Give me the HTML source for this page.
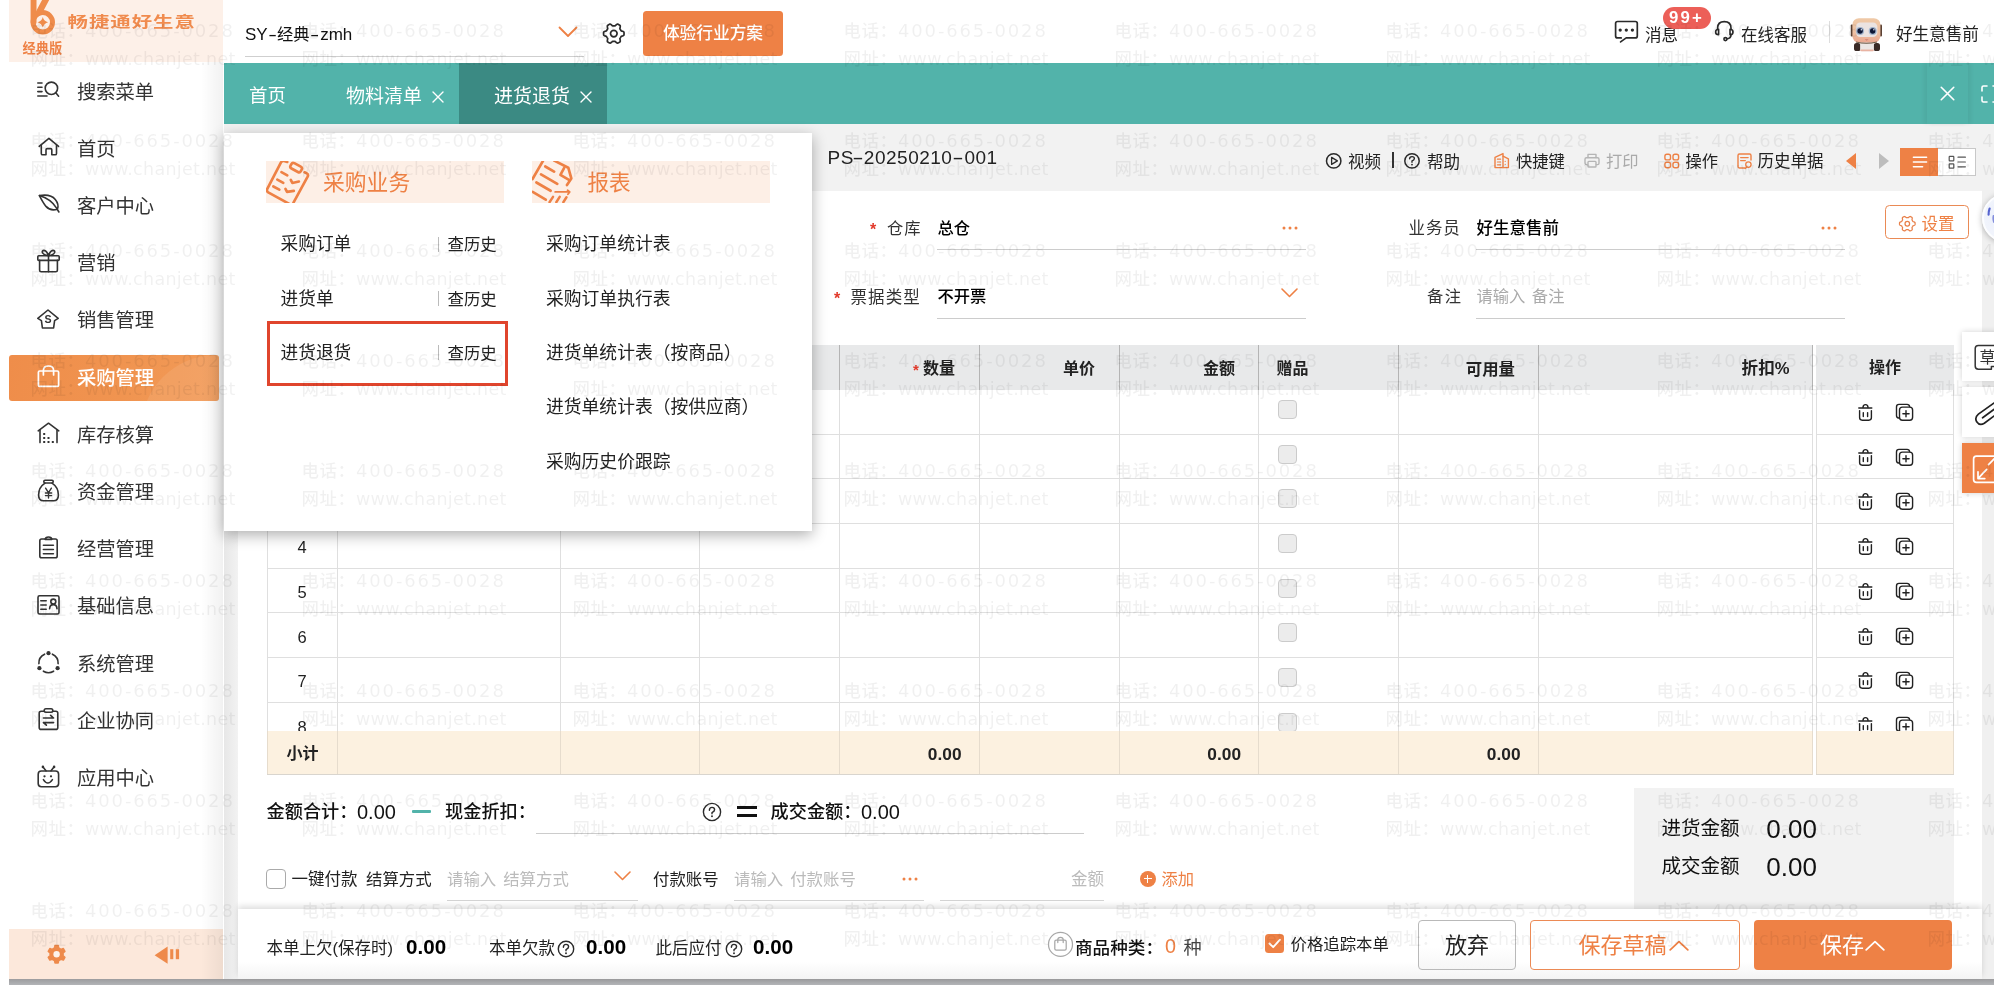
<!DOCTYPE html>
<html lang="zh-CN"><head><meta charset="utf-8"><title>进货退货</title>
<style>
html,body{margin:0;padding:0}
body{width:1994px;height:990px;position:relative;overflow:hidden;background:#fff;font-family:"Liberation Sans","Noto Sans CJK SC",sans-serif;-webkit-font-smoothing:antialiased}
.b{position:absolute;box-sizing:border-box}
.t{position:absolute;white-space:nowrap;line-height:1}
.wm{position:absolute;white-space:nowrap;line-height:1;font-size:17.5px;letter-spacing:0.5px;font-weight:500;color:rgba(0,0,0,0.058);transform:translateY(-50%)}
.hy{display:inline-block;text-align:center}
.hy>i{display:inline-block;font-style:normal;transform:scaleX(1.7)}
.wl{font-family:"DejaVu Sans","Liberation Sans",sans-serif;font-weight:400;margin-left:0.5px}
</style></head><body>
<div class="b" style="left:0;top:0;width:1994px;height:990px;overflow:hidden;will-change:transform">
<!-- base -->
<div class="b" style="left:9px;top:0px;width:1985px;height:979px;background:#fff"></div>
<div class="b" style="left:9px;top:979px;width:1985px;height:6px;background:linear-gradient(180deg,#9c9c9e,#b2b4b7)"></div>
<div class="b" style="left:224px;top:124px;width:1770px;height:67.5px;background:#f2f2f2"></div>
<div class="b" style="left:1982.2px;top:190px;width:12px;height:789px;background:#f0f0f0"></div>
<div class="b" style="left:224px;top:190px;width:14px;height:789px;background:linear-gradient(90deg,#e7e7e7,#f2f2f2)"></div>
<div class="b" style="left:238px;top:191px;width:1744px;height:719px;background:#fff"></div>
<!-- header -->
<span class="t" style="left:245px;top:34.300000000000004px;font-size:16.3px;color:#111;font-weight:400;transform:translate(0,-50%);letter-spacing:0"><span style="font-size:17px">SY</span><span class="hy" style="width:9.3px"><i style="transform:scaleX(1.6)">-</i></span>经典<span class="hy" style="width:10.6px"><i style="transform:scaleX(1.7)">-</i></span><span style="font-size:17px">zmh</span></span>
<div class="b" style="left:245px;top:56px;width:339px;height:1px;background:#cfcfcf"></div>
<svg class="b" style="left:558px;top:26px;" width="20" height="12" viewBox="0 0 20 12" fill="none" stroke-linecap="round" stroke-linejoin="round"><path d="M1.5 1.5 L10 10 L18.5 1.5" stroke="#ee8145" stroke-width="1.8"/></svg>
<div class="b" style="left:643.3px;top:11.3px;width:139.5px;height:44.5px;background:#ee8145;border-radius:3.5px"></div>
<span class="t" style="left:713px;top:34.2px;font-size:16.7px;color:#fff;font-weight:500;transform:translate(-50%,-50%);">体验行业方案</span>
<span class="t" style="left:1645px;top:34.7px;font-size:16.5px;color:#222;font-weight:400;transform:translate(0,-50%);">消息</span>
<div class="b" style="left:1663px;top:7px;width:48px;height:22px;background:#ec5f58;border-radius:11px"></div>
<span class="t" style="left:1686.6px;top:18.3px;font-size:16.8px;color:#fff;font-weight:700;transform:translate(-50%,-50%);letter-spacing:2.2px">99+</span>
<span class="t" style="left:1741px;top:34.7px;font-size:16.5px;color:#222;font-weight:400;transform:translate(0,-50%);">在线客服</span>
<div class="b" style="left:1829px;top:21px;width:1px;height:22px;background:#ddd"></div>
<span class="t" style="left:1896px;top:34.7px;font-size:16.6px;color:#222;font-weight:400;transform:translate(0,-50%);">好生意售前</span>
<!-- tabs -->
<div class="b" style="left:224px;top:63px;width:1770px;height:61px;background:#52b3aa"></div>
<div class="b" style="left:459px;top:63px;width:148px;height:61px;background:#3b8a83"></div>
<div class="b" style="left:1926.5px;top:63px;width:41.5px;height:61px;background:#51b2a9;box-shadow:-3px 0 4px rgba(0,0,0,.055),3px 0 4px rgba(0,0,0,.055)"></div>
<span class="t" style="left:249px;top:95.7px;font-size:18.5px;color:#fff;font-weight:400;transform:translate(0,-50%);">首页</span>
<span class="t" style="left:346px;top:95.7px;font-size:19px;color:#fff;font-weight:400;transform:translate(0,-50%);">物料清单</span>
<span class="t" style="left:494px;top:95.7px;font-size:19px;color:#fff;font-weight:400;transform:translate(0,-50%);">进货退货</span>
<svg class="b" style="left:432px;top:91px;" width="12" height="12" viewBox="0 0 12 12" fill="none" stroke-linecap="round" stroke-linejoin="round"><path d="M1 1 L11 11 M11 1 L1 11" stroke="#fff" stroke-width="1.4"/></svg>
<svg class="b" style="left:580px;top:91px;" width="12" height="12" viewBox="0 0 12 12" fill="none" stroke-linecap="round" stroke-linejoin="round"><path d="M1 1 L11 11 M11 1 L1 11" stroke="#fff" stroke-width="1.4"/></svg>
<svg class="b" style="left:1940px;top:86px;" width="15" height="15" viewBox="0 0 12 12" fill="none" stroke-linecap="round" stroke-linejoin="round"><path d="M1 1 L11 11 M11 1 L1 11" stroke="#fff" stroke-width="1.3"/></svg>
<svg class="b" style="left:1981px;top:85px;" width="18" height="18" viewBox="0 0 18 18" fill="none" stroke-linecap="round" stroke-linejoin="round"><path d="M1 6V2.5Q1 1 2.5 1H6 M12 1H15.5Q17 1 17 2.5V6 M1 12V15.5Q1 17 2.5 17H6 M12 17H15.5Q17 17 17 15.5V12" stroke="#fff" stroke-width="1.6"/></svg>
<!-- toolbar -->
<span class="t" style="left:827.5px;top:157.29999999999998px;font-size:19px;color:#222;font-weight:400;transform:translate(0,-50%);letter-spacing:0.5px">PS<span class="hy" style="width:10px"><i style="transform:scaleX(1.8)">-</i></span>20250210<span class="hy" style="width:12px"><i style="transform:scaleX(1.8)">-</i></span>001</span>
<span class="t" style="left:1348px;top:161.7px;font-size:16.5px;color:#222;font-weight:400;transform:translate(0,-50%);">视频</span>
<div class="b" style="left:1392.4px;top:152px;width:1.2px;height:16px;background:#333"></div>
<span class="t" style="left:1427px;top:161.7px;font-size:16.5px;color:#222;font-weight:400;transform:translate(0,-50%);">帮助</span>
<span class="t" style="left:1516px;top:161.2px;font-size:16.3px;color:#222;font-weight:400;transform:translate(0,-50%);">快捷键</span>
<span class="t" style="left:1606px;top:160.7px;font-size:16.3px;color:#aaa;font-weight:400;transform:translate(0,-50%);">打印</span>
<span class="t" style="left:1685.5px;top:160.7px;font-size:16.3px;color:#222;font-weight:400;transform:translate(0,-50%);">操作</span>
<span class="t" style="left:1757.5px;top:160.7px;font-size:16.5px;color:#222;font-weight:400;transform:translate(0,-50%);">历史单据</span>
<svg class="b" style="left:1846px;top:153px;" width="10" height="16" viewBox="0 0 10 16" fill="none" stroke-linecap="round" stroke-linejoin="round"><path d="M10 0 L0 8 L10 16 Z" fill="#ee8145"/></svg>
<svg class="b" style="left:1879px;top:153px;" width="10" height="16" viewBox="0 0 10 16" fill="none" stroke-linecap="round" stroke-linejoin="round"><path d="M0 0 L10 8 L0 16 Z" fill="#bdbdbd"/></svg>
<div class="b" style="left:1900px;top:148px;width:76px;height:28px;background:#fff;border:1px solid #c8c8c8"></div>
<div class="b" style="left:1900px;top:148px;width:38px;height:28px;background:#ee8145"></div>
<!-- form -->
<span class="t" style="left:870px;top:229.7px;font-size:16px;color:#e2392a;font-weight:700;transform:translate(0,-50%);">*</span>
<span class="t" style="left:887px;top:227.7px;font-size:16.3px;color:#333;font-weight:400;transform:translate(0,-50%);letter-spacing:1px">仓库</span>
<span class="t" style="left:937.5px;top:228.2px;font-size:16.3px;color:#000;font-weight:500;transform:translate(0,-50%);">总仓</span>
<div class="b" style="left:937px;top:249px;width:369px;height:1px;background:#ccc"></div>
<span class="t" style="left:834px;top:298.7px;font-size:16px;color:#e2392a;font-weight:700;transform:translate(0,-50%);">*</span>
<span class="t" style="left:850.5px;top:297.2px;font-size:16.5px;color:#333;font-weight:400;transform:translate(0,-50%);letter-spacing:1.1px">票据类型</span>
<span class="t" style="left:937.5px;top:295.9px;font-size:16.3px;color:#000;font-weight:500;transform:translate(0,-50%);">不开票</span>
<div class="b" style="left:937px;top:318px;width:369px;height:1px;background:#ccc"></div>
<svg class="b" style="left:1281px;top:288px;" width="17" height="10" viewBox="0 0 17 10" fill="none" stroke-linecap="round" stroke-linejoin="round"><path d="M1 1 L8.5 8.5 L16 1" stroke="#ee8145" stroke-width="1.6"/></svg>
<svg class="b" style="left:1282px;top:226px;" width="16" height="4" viewBox="0 0 16 4" fill="none" stroke-linecap="round" stroke-linejoin="round"><circle cx="2" cy="2" r="1.5" fill="#ee8145"/><circle cx="8" cy="2" r="1.5" fill="#ee8145"/><circle cx="14" cy="2" r="1.5" fill="#ee8145"/></svg>
<span class="t" style="left:1408.5px;top:227.89999999999998px;font-size:16.5px;color:#333;font-weight:400;transform:translate(0,-50%);letter-spacing:0.9px">业务员</span>
<span class="t" style="left:1476.5px;top:228.2px;font-size:16.5px;color:#000;font-weight:500;transform:translate(0,-50%);">好生意售前</span>
<div class="b" style="left:1476px;top:249px;width:369px;height:1px;background:#ccc"></div>
<svg class="b" style="left:1821px;top:226px;" width="16" height="4" viewBox="0 0 16 4" fill="none" stroke-linecap="round" stroke-linejoin="round"><circle cx="2" cy="2" r="1.5" fill="#ee8145"/><circle cx="8" cy="2" r="1.5" fill="#ee8145"/><circle cx="14" cy="2" r="1.5" fill="#ee8145"/></svg>
<span class="t" style="left:1427px;top:296.3px;font-size:16.3px;color:#333;font-weight:400;transform:translate(0,-50%);letter-spacing:1.5px">备注</span>
<span class="t" style="left:1476.5px;top:296.3px;font-size:16.3px;color:#aaa;font-weight:400;transform:translate(0,-50%);word-spacing:2px">请输入 备注</span>
<div class="b" style="left:1476px;top:318px;width:369px;height:1px;background:#ccc"></div>
<div class="b" style="left:1885.3px;top:204.8px;width:83.4px;height:33.9px;border:1.3px solid #ea8a55;border-radius:4.5px;background:#fff"></div>
<span class="t" style="left:1921.5px;top:223.7px;font-size:16.5px;color:#ee8145;font-weight:400;transform:translate(0,-50%);">设置</span>
<!-- table -->
<div class="b" style="left:267px;top:345px;width:1545px;height:44.6px;background:#e8e9ea"></div>
<div class="b" style="left:1816px;top:345px;width:138px;height:44.6px;background:#e8e9ea"></div>
<div class="b" style="left:267px;top:731px;width:1545px;height:43.5px;background:#fcf1e0"></div>
<div class="b" style="left:1816px;top:731px;width:138px;height:43.5px;background:#fcf1e0"></div>
<div class="b" style="left:267px;top:434px;width:1545px;height:1px;background:#dfdfdf"></div>
<div class="b" style="left:1816px;top:434px;width:138px;height:1px;background:#dfdfdf"></div>
<div class="b" style="left:267px;top:478px;width:1545px;height:1px;background:#dfdfdf"></div>
<div class="b" style="left:1816px;top:478px;width:138px;height:1px;background:#dfdfdf"></div>
<div class="b" style="left:267px;top:523px;width:1545px;height:1px;background:#dfdfdf"></div>
<div class="b" style="left:1816px;top:523px;width:138px;height:1px;background:#dfdfdf"></div>
<div class="b" style="left:267px;top:568px;width:1545px;height:1px;background:#dfdfdf"></div>
<div class="b" style="left:1816px;top:568px;width:138px;height:1px;background:#dfdfdf"></div>
<div class="b" style="left:267px;top:612px;width:1545px;height:1px;background:#dfdfdf"></div>
<div class="b" style="left:1816px;top:612px;width:138px;height:1px;background:#dfdfdf"></div>
<div class="b" style="left:267px;top:657px;width:1545px;height:1px;background:#dfdfdf"></div>
<div class="b" style="left:1816px;top:657px;width:138px;height:1px;background:#dfdfdf"></div>
<div class="b" style="left:267px;top:702px;width:1545px;height:1px;background:#dfdfdf"></div>
<div class="b" style="left:1816px;top:702px;width:138px;height:1px;background:#dfdfdf"></div>
<div class="b" style="left:267px;top:774px;width:1545px;height:1px;background:#d8d8d8"></div>
<div class="b" style="left:1816px;top:774px;width:138px;height:1px;background:#d8d8d8"></div>
<div class="b" style="left:267px;top:345px;width:1px;height:44.6px;background:#b4b4b4"></div>
<div class="b" style="left:267px;top:389.6px;width:1px;height:385px;background:#dfdfdf"></div>
<div class="b" style="left:337px;top:345px;width:1px;height:44.6px;background:#b4b4b4"></div>
<div class="b" style="left:337px;top:389.6px;width:1px;height:385px;background:#dfdfdf"></div>
<div class="b" style="left:560px;top:345px;width:1px;height:44.6px;background:#b4b4b4"></div>
<div class="b" style="left:560px;top:389.6px;width:1px;height:385px;background:#dfdfdf"></div>
<div class="b" style="left:699px;top:345px;width:1px;height:44.6px;background:#b4b4b4"></div>
<div class="b" style="left:699px;top:389.6px;width:1px;height:385px;background:#dfdfdf"></div>
<div class="b" style="left:839px;top:345px;width:1px;height:44.6px;background:#b4b4b4"></div>
<div class="b" style="left:839px;top:389.6px;width:1px;height:385px;background:#dfdfdf"></div>
<div class="b" style="left:979px;top:345px;width:1px;height:44.6px;background:#b4b4b4"></div>
<div class="b" style="left:979px;top:389.6px;width:1px;height:385px;background:#dfdfdf"></div>
<div class="b" style="left:1119px;top:345px;width:1px;height:44.6px;background:#b4b4b4"></div>
<div class="b" style="left:1119px;top:389.6px;width:1px;height:385px;background:#dfdfdf"></div>
<div class="b" style="left:1258px;top:345px;width:1px;height:44.6px;background:#b4b4b4"></div>
<div class="b" style="left:1258px;top:389.6px;width:1px;height:385px;background:#dfdfdf"></div>
<div class="b" style="left:1398px;top:345px;width:1px;height:44.6px;background:#b4b4b4"></div>
<div class="b" style="left:1398px;top:389.6px;width:1px;height:385px;background:#dfdfdf"></div>
<div class="b" style="left:1538px;top:345px;width:1px;height:44.6px;background:#b4b4b4"></div>
<div class="b" style="left:1538px;top:389.6px;width:1px;height:385px;background:#dfdfdf"></div>
<div class="b" style="left:1812px;top:345px;width:1px;height:44.6px;background:#b4b4b4"></div>
<div class="b" style="left:1812px;top:389.6px;width:1px;height:385px;background:#dfdfdf"></div>
<div class="b" style="left:1953px;top:389.6px;width:1px;height:385px;background:#dfdfdf"></div>
<div class="b" style="left:1816px;top:389.6px;width:1px;height:385px;background:#dfdfdf"></div>
<span class="t" style="left:913px;top:368.7px;font-size:15px;color:#e2392a;font-weight:700;transform:translate(0,-50%);">*</span>
<span class="t" style="left:955px;top:369.2px;font-size:16px;color:#222;font-weight:700;transform:translate(-100%,-50%);">数量</span>
<span class="t" style="left:1095px;top:369.2px;font-size:16px;color:#222;font-weight:700;transform:translate(-100%,-50%);">单价</span>
<span class="t" style="left:1235px;top:369.2px;font-size:16px;color:#222;font-weight:700;transform:translate(-100%,-50%);">金额</span>
<span class="t" style="left:1276.5px;top:369.2px;font-size:16px;color:#222;font-weight:700;transform:translate(0,-50%);">赠品</span>
<span class="t" style="left:1515px;top:369.2px;font-size:16.4px;color:#222;font-weight:700;transform:translate(-100%,-50%);">可用量</span>
<span class="t" style="left:1789.5px;top:369.2px;font-size:16.6px;color:#222;font-weight:700;transform:translate(-100%,-50%);">折扣%</span>
<span class="t" style="left:1885px;top:368.2px;font-size:16px;color:#222;font-weight:700;transform:translate(-50%,-50%);">操作</span>
<div class="b" style="left:1278px;top:399.8px;width:19px;height:19px;background:#ececec;border:1px solid #cbcbcb;border-radius:4px"></div>
<svg class="b" style="left:1855px;top:401.0px" width="62" height="22" viewBox="1855 401 62 22" fill="none" stroke="#222" stroke-width="1.4" stroke-linecap="round" stroke-linejoin="round"><path d="M1858.8 408H1871.8"/><path d="M1863 407.6Q1863 404.6 1865.5 404.6Q1868 404.6 1868 407.6"/><path d="M1859.6 410.6V417.6Q1859.6 420.2 1862.2 420.2H1868.8Q1871.4 420.2 1871.4 417.6V410.6"/><path d="M1863.3 412.6V416.6 M1867.6 412.6V416.6"/><path d="M1909.6 406.6Q1909.4 404.4 1907 404.4H1899Q1896.5 404.4 1896.5 407V415.4Q1896.5 417.6 1898.6 418"/><rect x="1899.5" y="407.1" width="13.1" height="13.1" rx="2.9"/><path d="M1906 410.6V416.8 M1902.9 413.7H1909.1"/></svg>
<div class="b" style="left:1278px;top:444.5px;width:19px;height:19px;background:#ececec;border:1px solid #cbcbcb;border-radius:4px"></div>
<svg class="b" style="left:1855px;top:445.7px" width="62" height="22" viewBox="1855 401 62 22" fill="none" stroke="#222" stroke-width="1.4" stroke-linecap="round" stroke-linejoin="round"><path d="M1858.8 408H1871.8"/><path d="M1863 407.6Q1863 404.6 1865.5 404.6Q1868 404.6 1868 407.6"/><path d="M1859.6 410.6V417.6Q1859.6 420.2 1862.2 420.2H1868.8Q1871.4 420.2 1871.4 417.6V410.6"/><path d="M1863.3 412.6V416.6 M1867.6 412.6V416.6"/><path d="M1909.6 406.6Q1909.4 404.4 1907 404.4H1899Q1896.5 404.4 1896.5 407V415.4Q1896.5 417.6 1898.6 418"/><rect x="1899.5" y="407.1" width="13.1" height="13.1" rx="2.9"/><path d="M1906 410.6V416.8 M1902.9 413.7H1909.1"/></svg>
<div class="b" style="left:1278px;top:489.20000000000005px;width:19px;height:19px;background:#ececec;border:1px solid #cbcbcb;border-radius:4px"></div>
<svg class="b" style="left:1855px;top:490.4px" width="62" height="22" viewBox="1855 401 62 22" fill="none" stroke="#222" stroke-width="1.4" stroke-linecap="round" stroke-linejoin="round"><path d="M1858.8 408H1871.8"/><path d="M1863 407.6Q1863 404.6 1865.5 404.6Q1868 404.6 1868 407.6"/><path d="M1859.6 410.6V417.6Q1859.6 420.2 1862.2 420.2H1868.8Q1871.4 420.2 1871.4 417.6V410.6"/><path d="M1863.3 412.6V416.6 M1867.6 412.6V416.6"/><path d="M1909.6 406.6Q1909.4 404.4 1907 404.4H1899Q1896.5 404.4 1896.5 407V415.4Q1896.5 417.6 1898.6 418"/><rect x="1899.5" y="407.1" width="13.1" height="13.1" rx="2.9"/><path d="M1906 410.6V416.8 M1902.9 413.7H1909.1"/></svg>
<span class="t" style="left:302px;top:547.1px;font-size:16.5px;color:#222;font-weight:400;transform:translate(-50%,-50%);z-index:0">4</span>
<div class="b" style="left:1278px;top:533.9000000000001px;width:19px;height:19px;background:#ececec;border:1px solid #cbcbcb;border-radius:4px"></div>
<svg class="b" style="left:1855px;top:535.1px" width="62" height="22" viewBox="1855 401 62 22" fill="none" stroke="#222" stroke-width="1.4" stroke-linecap="round" stroke-linejoin="round"><path d="M1858.8 408H1871.8"/><path d="M1863 407.6Q1863 404.6 1865.5 404.6Q1868 404.6 1868 407.6"/><path d="M1859.6 410.6V417.6Q1859.6 420.2 1862.2 420.2H1868.8Q1871.4 420.2 1871.4 417.6V410.6"/><path d="M1863.3 412.6V416.6 M1867.6 412.6V416.6"/><path d="M1909.6 406.6Q1909.4 404.4 1907 404.4H1899Q1896.5 404.4 1896.5 407V415.4Q1896.5 417.6 1898.6 418"/><rect x="1899.5" y="407.1" width="13.1" height="13.1" rx="2.9"/><path d="M1906 410.6V416.8 M1902.9 413.7H1909.1"/></svg>
<span class="t" style="left:302px;top:591.8px;font-size:16.5px;color:#222;font-weight:400;transform:translate(-50%,-50%);z-index:0">5</span>
<div class="b" style="left:1278px;top:578.6px;width:19px;height:19px;background:#ececec;border:1px solid #cbcbcb;border-radius:4px"></div>
<svg class="b" style="left:1855px;top:579.8px" width="62" height="22" viewBox="1855 401 62 22" fill="none" stroke="#222" stroke-width="1.4" stroke-linecap="round" stroke-linejoin="round"><path d="M1858.8 408H1871.8"/><path d="M1863 407.6Q1863 404.6 1865.5 404.6Q1868 404.6 1868 407.6"/><path d="M1859.6 410.6V417.6Q1859.6 420.2 1862.2 420.2H1868.8Q1871.4 420.2 1871.4 417.6V410.6"/><path d="M1863.3 412.6V416.6 M1867.6 412.6V416.6"/><path d="M1909.6 406.6Q1909.4 404.4 1907 404.4H1899Q1896.5 404.4 1896.5 407V415.4Q1896.5 417.6 1898.6 418"/><rect x="1899.5" y="407.1" width="13.1" height="13.1" rx="2.9"/><path d="M1906 410.6V416.8 M1902.9 413.7H1909.1"/></svg>
<span class="t" style="left:302px;top:636.5px;font-size:16.5px;color:#222;font-weight:400;transform:translate(-50%,-50%);z-index:0">6</span>
<div class="b" style="left:1278px;top:623.3px;width:19px;height:19px;background:#ececec;border:1px solid #cbcbcb;border-radius:4px"></div>
<svg class="b" style="left:1855px;top:624.5px" width="62" height="22" viewBox="1855 401 62 22" fill="none" stroke="#222" stroke-width="1.4" stroke-linecap="round" stroke-linejoin="round"><path d="M1858.8 408H1871.8"/><path d="M1863 407.6Q1863 404.6 1865.5 404.6Q1868 404.6 1868 407.6"/><path d="M1859.6 410.6V417.6Q1859.6 420.2 1862.2 420.2H1868.8Q1871.4 420.2 1871.4 417.6V410.6"/><path d="M1863.3 412.6V416.6 M1867.6 412.6V416.6"/><path d="M1909.6 406.6Q1909.4 404.4 1907 404.4H1899Q1896.5 404.4 1896.5 407V415.4Q1896.5 417.6 1898.6 418"/><rect x="1899.5" y="407.1" width="13.1" height="13.1" rx="2.9"/><path d="M1906 410.6V416.8 M1902.9 413.7H1909.1"/></svg>
<span class="t" style="left:302px;top:681.2px;font-size:16.5px;color:#222;font-weight:400;transform:translate(-50%,-50%);z-index:0">7</span>
<div class="b" style="left:1278px;top:668.0px;width:19px;height:19px;background:#ececec;border:1px solid #cbcbcb;border-radius:4px"></div>
<svg class="b" style="left:1855px;top:669.2px" width="62" height="22" viewBox="1855 401 62 22" fill="none" stroke="#222" stroke-width="1.4" stroke-linecap="round" stroke-linejoin="round"><path d="M1858.8 408H1871.8"/><path d="M1863 407.6Q1863 404.6 1865.5 404.6Q1868 404.6 1868 407.6"/><path d="M1859.6 410.6V417.6Q1859.6 420.2 1862.2 420.2H1868.8Q1871.4 420.2 1871.4 417.6V410.6"/><path d="M1863.3 412.6V416.6 M1867.6 412.6V416.6"/><path d="M1909.6 406.6Q1909.4 404.4 1907 404.4H1899Q1896.5 404.4 1896.5 407V415.4Q1896.5 417.6 1898.6 418"/><rect x="1899.5" y="407.1" width="13.1" height="13.1" rx="2.9"/><path d="M1906 410.6V416.8 M1902.9 413.7H1909.1"/></svg>
<span class="t" style="left:302px;top:726.9000000000001px;font-size:16.5px;color:#222;font-weight:400;transform:translate(-50%,-50%);z-index:0">8</span>
<div class="b" style="left:1278px;top:712.7px;width:19px;height:19px;background:#ececec;border:1px solid #cbcbcb;border-radius:4px"></div>
<svg class="b" style="left:1855px;top:713.9000000000001px" width="62" height="22" viewBox="1855 401 62 22" fill="none" stroke="#222" stroke-width="1.4" stroke-linecap="round" stroke-linejoin="round"><path d="M1858.8 408H1871.8"/><path d="M1863 407.6Q1863 404.6 1865.5 404.6Q1868 404.6 1868 407.6"/><path d="M1859.6 410.6V417.6Q1859.6 420.2 1862.2 420.2H1868.8Q1871.4 420.2 1871.4 417.6V410.6"/><path d="M1863.3 412.6V416.6 M1867.6 412.6V416.6"/><path d="M1909.6 406.6Q1909.4 404.4 1907 404.4H1899Q1896.5 404.4 1896.5 407V415.4Q1896.5 417.6 1898.6 418"/><rect x="1899.5" y="407.1" width="13.1" height="13.1" rx="2.9"/><path d="M1906 410.6V416.8 M1902.9 413.7H1909.1"/></svg>
<div class="b" style="left:267px;top:731px;width:1545px;height:43.5px;background:#fcf1e0"></div>
<div class="b" style="left:1816px;top:731px;width:138px;height:43.5px;background:#fcf1e0"></div>
<div class="b" style="left:267px;top:731px;width:1px;height:43.5px;background:#e6dccd"></div>
<div class="b" style="left:337px;top:731px;width:1px;height:43.5px;background:#e6dccd"></div>
<div class="b" style="left:560px;top:731px;width:1px;height:43.5px;background:#e6dccd"></div>
<div class="b" style="left:699px;top:731px;width:1px;height:43.5px;background:#e6dccd"></div>
<div class="b" style="left:839px;top:731px;width:1px;height:43.5px;background:#e6dccd"></div>
<div class="b" style="left:979px;top:731px;width:1px;height:43.5px;background:#e6dccd"></div>
<div class="b" style="left:1119px;top:731px;width:1px;height:43.5px;background:#e6dccd"></div>
<div class="b" style="left:1258px;top:731px;width:1px;height:43.5px;background:#e6dccd"></div>
<div class="b" style="left:1398px;top:731px;width:1px;height:43.5px;background:#e6dccd"></div>
<div class="b" style="left:1538px;top:731px;width:1px;height:43.5px;background:#e6dccd"></div>
<div class="b" style="left:1812px;top:731px;width:1px;height:43.5px;background:#e6dccd"></div>
<div class="b" style="left:1816px;top:731px;width:1px;height:43.5px;background:#e6dccd"></div>
<div class="b" style="left:1953px;top:731px;width:1px;height:43.5px;background:#e6dccd"></div>
<div class="b" style="left:267px;top:774px;width:1545px;height:1px;background:#d9d5ce"></div>
<div class="b" style="left:1816px;top:774px;width:138px;height:1px;background:#d9d5ce"></div>
<span class="t" style="left:302.5px;top:754.2px;font-size:16px;color:#222;font-weight:700;transform:translate(-50%,-50%);">小计</span>
<span class="t" style="left:961.5px;top:754.7px;font-size:17.3px;color:#222;font-weight:700;transform:translate(-100%,-50%);">0.00</span>
<span class="t" style="left:1241px;top:754.7px;font-size:17.3px;color:#222;font-weight:700;transform:translate(-100%,-50%);">0.00</span>
<span class="t" style="left:1520.5px;top:754.7px;font-size:17.3px;color:#222;font-weight:700;transform:translate(-100%,-50%);">0.00</span>
<!-- summary -->
<span class="t" style="left:266.5px;top:812.2px;font-size:18.2px;color:#111;font-weight:500;transform:translate(0,-50%);letter-spacing:0">金额合计：</span>
<span class="t" style="left:357px;top:811.7px;font-size:20px;color:#111;font-weight:400;transform:translate(0,-50%);">0.00</span>
<div class="b" style="left:412px;top:810px;width:19px;height:2.5px;background:#52b3aa;border-radius:1px"></div>
<span class="t" style="left:445px;top:812.2px;font-size:18.2px;color:#111;font-weight:500;transform:translate(0,-50%);">现金折扣：</span>
<div class="b" style="left:536px;top:833px;width:548px;height:1px;background:#ccc"></div>
<div class="b" style="left:736.5px;top:806px;width:20px;height:3px;background:#111"></div>
<div class="b" style="left:736.5px;top:814px;width:20px;height:3px;background:#111"></div>
<span class="t" style="left:770.5px;top:812.2px;font-size:18.2px;color:#111;font-weight:500;transform:translate(0,-50%);">成交金额：</span>
<span class="t" style="left:861px;top:811.7px;font-size:20px;color:#111;font-weight:400;transform:translate(0,-50%);">0.00</span>
<div class="b" style="left:266px;top:869px;width:19.5px;height:19.5px;border:1.3px solid #aaa;border-radius:4px;background:#fff"></div>
<span class="t" style="left:291.5px;top:879.2px;font-size:16.5px;color:#222;font-weight:400;transform:translate(0,-50%);">一键付款</span>
<span class="t" style="left:366px;top:879.2px;font-size:16.4px;color:#222;font-weight:400;transform:translate(0,-50%);">结算方式</span>
<span class="t" style="left:447px;top:879.2px;font-size:16.4px;color:#bbb;font-weight:400;transform:translate(0,-50%);word-spacing:2.5px">请输入 结算方式</span>
<svg class="b" style="left:614px;top:871px;" width="17" height="10" viewBox="0 0 17 10" fill="none" stroke-linecap="round" stroke-linejoin="round"><path d="M1 1 L8.5 8.5 L16 1" stroke="#ee8145" stroke-width="1.6"/></svg>
<div class="b" style="left:447px;top:900px;width:191px;height:1px;background:#d4d4d4"></div>
<span class="t" style="left:653px;top:879.2px;font-size:16.4px;color:#222;font-weight:400;transform:translate(0,-50%);">付款账号</span>
<span class="t" style="left:734px;top:879.2px;font-size:16.4px;color:#bbb;font-weight:400;transform:translate(0,-50%);word-spacing:2.5px">请输入 付款账号</span>
<svg class="b" style="left:901.5px;top:877px;" width="16" height="4" viewBox="0 0 16 4" fill="none" stroke-linecap="round" stroke-linejoin="round"><circle cx="2" cy="2" r="1.5" fill="#ee8145"/><circle cx="8" cy="2" r="1.5" fill="#ee8145"/><circle cx="14" cy="2" r="1.5" fill="#ee8145"/></svg>
<div class="b" style="left:734px;top:900px;width:190px;height:1px;background:#d4d4d4"></div>
<span class="t" style="left:1104px;top:879.2px;font-size:16.5px;color:#bbb;font-weight:400;transform:translate(-100%,-50%);">金额</span>
<div class="b" style="left:940px;top:900px;width:164px;height:1px;background:#d4d4d4"></div>
<div class="b" style="left:1139.5px;top:870.5px;width:16px;height:16px;background:#ee8145;border-radius:50%"></div>
<div class="b" style="left:1143.5px;top:877.7px;width:8px;height:1.6px;background:#fff"></div>
<div class="b" style="left:1146.7px;top:874.5px;width:1.6px;height:8px;background:#fff"></div>
<span class="t" style="left:1161.5px;top:879.2px;font-size:16.3px;color:#ee8145;font-weight:400;transform:translate(0,-50%);">添加</span>
<div class="b" style="left:1634px;top:788px;width:320px;height:122px;background:#f2f2f2"></div>
<span class="t" style="left:1661.5px;top:829.2px;font-size:19.5px;color:#111;font-weight:400;transform:translate(0,-50%);">进货金额</span>
<span class="t" style="left:1766.3px;top:829.2px;font-size:26px;color:#111;font-weight:400;transform:translate(0,-50%);">0.00</span>
<span class="t" style="left:1661.5px;top:867.2px;font-size:19.5px;color:#111;font-weight:400;transform:translate(0,-50%);">成交金额</span>
<span class="t" style="left:1766.3px;top:867.2px;font-size:26px;color:#111;font-weight:400;transform:translate(0,-50%);">0.00</span>
<!-- bottom bar -->
<div class="b" style="left:238px;top:909px;width:1744px;height:70px;background:linear-gradient(180deg,#fff 75%,#f4f4f4);box-shadow:0 -3px 6px rgba(0,0,0,.13)"></div>
<span class="t" style="left:266.5px;top:948.2px;font-size:16.5px;color:#222;font-weight:400;transform:translate(0,-50%);">本单上欠(保存时)</span>
<span class="t" style="left:406px;top:947.2px;font-size:20.6px;color:#000;font-weight:700;transform:translate(0,-50%);">0.00</span>
<span class="t" style="left:489px;top:948.2px;font-size:16.5px;color:#222;font-weight:400;transform:translate(0,-50%);">本单欠款</span>
<span class="t" style="left:586px;top:947.2px;font-size:20.6px;color:#000;font-weight:700;transform:translate(0,-50%);">0.00</span>
<span class="t" style="left:655.5px;top:948.2px;font-size:16.5px;color:#222;font-weight:400;transform:translate(0,-50%);">此后应付</span>
<span class="t" style="left:753px;top:947.2px;font-size:20.6px;color:#000;font-weight:700;transform:translate(0,-50%);">0.00</span>
<span class="t" style="left:1075px;top:948.9000000000001px;font-size:17.6px;color:#111;font-weight:500;transform:translate(0,-50%);">商品种类：</span>
<span class="t" style="left:1165px;top:946.5px;font-size:19.8px;color:#ee8145;font-weight:400;transform:translate(0,-50%);">0</span>
<span class="t" style="left:1183.6px;top:947.9000000000001px;font-size:18.2px;color:#444;font-weight:400;transform:translate(0,-50%);">种</span>
<div class="b" style="left:1265px;top:934px;width:19px;height:19px;background:#ee8145;border-radius:3.5px"></div>
<svg class="b" style="left:1265px;top:934px;" width="19" height="19" viewBox="0 0 19 19" fill="none" stroke-linecap="round" stroke-linejoin="round"><path d="M4.5 9.5 L8.2 13.2 L14.8 5.8" stroke="#fff" stroke-width="1.9"/></svg>
<span class="t" style="left:1290.5px;top:944.2px;font-size:16.4px;color:#222;font-weight:400;transform:translate(0,-50%);">价格追踪本单</span>
<div class="b" style="left:1418.3px;top:920px;width:97.5px;height:49.8px;border:1px solid #b9b9b9;border-radius:4px;background:linear-gradient(180deg,#fff 55%,#f6f6f6)"></div>
<span class="t" style="left:1467px;top:945.7px;font-size:22px;color:#222;font-weight:400;transform:translate(-50%,-50%);">放弃</span>
<div class="b" style="left:1530px;top:919.8px;width:209.8px;height:50px;border:1.3px solid #ec8a55;border-radius:4px;background:#fff"></div>
<span class="t" style="left:1578.5px;top:945.7px;font-size:22px;color:#ee8145;font-weight:400;transform:translate(0,-50%);">保存草稿</span>
<svg class="b" style="left:1668.5px;top:940px;" width="20" height="11" viewBox="0 0 20 11" fill="none" stroke-linecap="round" stroke-linejoin="round"><path d="M1.2 9.8 L10 1.6 L18.8 9.8" stroke="#ee8145" stroke-width="1.8"/></svg>
<div class="b" style="left:1753.5px;top:919.8px;width:198.5px;height:50px;background:#ee8145;border-radius:4px"></div>
<span class="t" style="left:1820px;top:945.7px;font-size:22px;color:#fff;font-weight:400;transform:translate(0,-50%);">保存</span>
<svg class="b" style="left:1865px;top:940px;" width="20" height="11" viewBox="0 0 20 11" fill="none" stroke-linecap="round" stroke-linejoin="round"><path d="M1.2 9.8 L10 1.6 L18.8 9.8" stroke="#fff" stroke-width="1.8"/></svg>
<!-- sidebar -->
<div class="b" style="left:9px;top:0px;width:214px;height:979px;background:#fff"></div>
<div class="b" style="left:9px;top:0px;width:214px;height:62px;background:#fdf0e8"></div>
<span class="t" style="left:67.5px;top:21.8px;font-size:20.4px;color:#f08b4e;font-weight:700;letter-spacing:1px;transform:translate(0,-50%) scaleY(0.74);transform-origin:0 50%">畅捷通好生意</span>
<span class="t" style="left:22.6px;top:48.5px;font-size:13.2px;color:#ee8145;font-weight:700;transform:translate(0,-50%);">经典版</span>
<div class="b" style="left:9px;top:355px;width:210px;height:46px;background:linear-gradient(100deg,#ef8d4a 0%,#f09450 55%,#f29b58 100%);border-radius:3px;overflow:hidden"></div>
<div class="b" style="left:9px;top:355px;width:210px;height:46px;border-radius:3px;overflow:hidden"><div class="b" style="left:132px;top:0px;width:150px;height:150px;border-radius:50%;background:rgba(255,255,255,.085)"></div></div>
<span class="t" style="left:77px;top:92.50000000000001px;font-size:19.3px;color:#333;font-weight:400;transform:translate(0,-50%);">搜索菜单</span>
<span class="t" style="left:77px;top:149.70000000000002px;font-size:19.3px;color:#333;font-weight:400;transform:translate(0,-50%);">首页</span>
<span class="t" style="left:77px;top:206.9px;font-size:19.3px;color:#333;font-weight:400;transform:translate(0,-50%);">客户中心</span>
<span class="t" style="left:77px;top:264.09999999999997px;font-size:19.3px;color:#333;font-weight:400;transform:translate(0,-50%);">营销</span>
<span class="t" style="left:77px;top:321.3px;font-size:19.3px;color:#333;font-weight:400;transform:translate(0,-50%);">销售管理</span>
<span class="t" style="left:77px;top:378.49999999999994px;font-size:19.3px;color:#fff;font-weight:500;transform:translate(0,-50%);">采购管理</span>
<span class="t" style="left:77px;top:435.7px;font-size:19.3px;color:#333;font-weight:400;transform:translate(0,-50%);">库存核算</span>
<span class="t" style="left:77px;top:492.90000000000003px;font-size:19.3px;color:#333;font-weight:400;transform:translate(0,-50%);">资金管理</span>
<span class="t" style="left:77px;top:550.1px;font-size:19.3px;color:#333;font-weight:400;transform:translate(0,-50%);">经营管理</span>
<span class="t" style="left:77px;top:607.3000000000001px;font-size:19.3px;color:#333;font-weight:400;transform:translate(0,-50%);">基础信息</span>
<span class="t" style="left:77px;top:664.5px;font-size:19.3px;color:#333;font-weight:400;transform:translate(0,-50%);">系统管理</span>
<span class="t" style="left:77px;top:721.7px;font-size:19.3px;color:#333;font-weight:400;transform:translate(0,-50%);">企业协同</span>
<span class="t" style="left:77px;top:778.9000000000001px;font-size:19.3px;color:#333;font-weight:400;transform:translate(0,-50%);">应用中心</span>
<div class="b" style="left:9px;top:929px;width:214px;height:50px;background:#fce8db"></div>
<div class="b" style="left:201px;top:62px;width:22px;height:917px;background:linear-gradient(90deg,rgba(0,0,0,0),rgba(0,0,0,.055))"></div>
<!-- popup -->
<div class="b" style="left:224px;top:132.6px;width:587.8px;height:398.6px;background:#fff;box-shadow:0 4px 14px rgba(0,0,0,.32)"></div>
<div class="b" style="left:266px;top:161px;width:238px;height:41.5px;background:#fdefe6;overflow:hidden"><svg class="b" style="left:0;top:0" width="238" height="42" viewBox="0 0 238 42"><g transform="translate(-10,-11) scale(0.060606)" stroke="#ee8145" stroke-width="44" fill="none" stroke-linecap="round" stroke-linejoin="round"><path d="M515 198L462 182Q428 176 410 208L186 640Q168 678 202 698L560 896Q592 912 612 880L852 440Q870 405 838 386L802 368"/><rect x="-96" y="-50" width="192" height="100" rx="36" transform="translate(662,290) rotate(28)"/><path d="M420 366L516 420 M352 490L450 542 M286 602L385 654"/><path d="M574 492L600 544L708 520 M486 642L512 692L624 674"/></g></svg></div>
<div class="b" style="left:531.5px;top:161px;width:238px;height:41.5px;background:#fdefe6;overflow:hidden"><svg class="b" style="left:0;top:0" width="238" height="42" viewBox="0 0 238 42"><g transform="translate(-10.5,-11) scale(0.060606)" stroke="#ee8145" stroke-width="44" fill="none" stroke-linecap="round" stroke-linejoin="round"><path d="M360 170L182 480"/><path d="M540 175L772 292L822 470L750 578"/><path d="M702 300L642 412L790 498"/><path d="M392 272L538 358 M322 402L590 560 M246 536L480 672 M184 692L400 820"/><path d="M556 692H792 M760 664L796 692L766 730" stroke-width="30"/><path d="M462 862L520 772 M574 862L630 772 M690 862L742 780" stroke-width="40"/></g></svg></div>
<span class="t" style="left:323px;top:182.7px;font-size:21.8px;color:#ee8145;font-weight:400;transform:translate(0,-50%);">采购业务</span>
<span class="t" style="left:587.5px;top:182.7px;font-size:21.6px;color:#ee8145;font-weight:400;transform:translate(0,-50%);">报表</span>
<span class="t" style="left:280.5px;top:245.2px;font-size:17.7px;color:#222;font-weight:400;transform:translate(0,-50%);">采购订单</span>
<div class="b" style="left:438px;top:236.5px;width:1px;height:15px;background:#bbb"></div>
<span class="t" style="left:447.5px;top:244.39999999999998px;font-size:16.4px;color:#222;font-weight:400;transform:translate(0,-50%);">查历史</span>
<span class="t" style="left:280.5px;top:299.7px;font-size:17.7px;color:#222;font-weight:400;transform:translate(0,-50%);">进货单</span>
<div class="b" style="left:438px;top:291.0px;width:1px;height:15px;background:#bbb"></div>
<span class="t" style="left:447.5px;top:298.9px;font-size:16.4px;color:#222;font-weight:400;transform:translate(0,-50%);">查历史</span>
<span class="t" style="left:280.5px;top:353.7px;font-size:17.7px;color:#222;font-weight:400;transform:translate(0,-50%);">进货退货</span>
<div class="b" style="left:438px;top:345.0px;width:1px;height:15px;background:#bbb"></div>
<span class="t" style="left:447.5px;top:352.9px;font-size:16.4px;color:#222;font-weight:400;transform:translate(0,-50%);">查历史</span>
<span class="t" style="left:546px;top:245.2px;font-size:17.8px;color:#222;font-weight:400;transform:translate(0,-50%);">采购订单统计表</span>
<span class="t" style="left:546px;top:299.7px;font-size:17.8px;color:#222;font-weight:400;transform:translate(0,-50%);">采购订单执行表</span>
<span class="t" style="left:546px;top:353.7px;font-size:17.8px;color:#222;font-weight:400;transform:translate(0,-50%);">进货单统计表（按商品）</span>
<span class="t" style="left:546px;top:408.2px;font-size:17.8px;color:#222;font-weight:400;transform:translate(0,-50%);">进货单统计表（按供应商）</span>
<span class="t" style="left:546px;top:462.7px;font-size:17.8px;color:#222;font-weight:400;transform:translate(0,-50%);">采购历史价跟踪</span>
<div class="b" style="left:267.2px;top:320.5px;width:240.8px;height:65px;border:3px solid #e0452d"></div>
<!-- icons -->
<svg class="b" style="left:34px;top:77px;" width="30" height="26" viewBox="34 77 30 26" fill="none" stroke="#333" stroke-width="1.6" stroke-linecap="round" stroke-linejoin="round"><path d="M37.8 83H42 M37.8 87.3H42 M37.8 91.6H42 M37.8 96H47"/><circle cx="51.4" cy="88.3" r="6.2"/><path d="M55.8 92.8L58.6 96.2"/></svg>
<svg class="b" style="left:34px;top:134px;" width="30" height="26" viewBox="34 134 30 26" fill="none" stroke="#333" stroke-width="1.6" stroke-linecap="round" stroke-linejoin="round"><path d="M39.2 146.3L48.9 138.3L58.6 146.3"/><path d="M41.3 145.2V153.4Q41.3 154.8 42.7 154.8H46V149.8Q46 148.6 47.2 148.6H50.6Q51.8 148.6 51.8 149.8V154.8H55.1Q56.5 154.8 56.5 153.4V145.2"/></svg>
<svg class="b" style="left:34px;top:190px;" width="30" height="28" viewBox="34 190 30 28" fill="none" stroke="#333" stroke-width="1.6" stroke-linecap="round" stroke-linejoin="round"><path d="M39.4 195.6Q50.5 193.6 55.3 199.4Q59.3 204.4 57.4 209.2Q50.5 211.4 46 206.4Q43.2 203 39.4 195.6Z"/><path d="M39.4 195.6Q50.5 199 56.2 207.6L58.9 212"/></svg>
<svg class="b" style="left:34px;top:246px;" width="30" height="30" viewBox="34 246 30 30" fill="none" stroke="#333" stroke-width="1.6" stroke-linecap="round" stroke-linejoin="round"><rect x="37.8" y="255.8" width="21.4" height="4.6" rx="1"/><path d="M39.6 260.4V270.2Q39.6 271.8 41.2 271.8H55.8Q57.4 271.8 57.4 270.2V260.4"/><path d="M48.5 255.8V271.8"/><path d="M48.5 255.6Q43.5 255 42.4 252.6Q41.8 250.4 44 250.4Q46.6 250.6 48.5 255.6Q50.4 250.6 53 250.4Q55.2 250.4 54.6 252.6Q53.5 255 48.5 255.6"/></svg>
<svg class="b" style="left:34px;top:306px;" width="30" height="26" viewBox="34 306 30 26" fill="none" stroke="#333" stroke-width="1.6" stroke-linecap="round" stroke-linejoin="round"><path d="M48 310L37.8 318.4L41.4 320.6L42.4 328H53.6L54.6 320.6L58.2 318.4Z"/><text x="48" y="322.9" font-size="10.6" font-weight="700" fill="#333" stroke="none" text-anchor="middle" font-family="Liberation Sans,sans-serif">S</text></svg>
<svg class="b" style="left:34px;top:362px;" width="30" height="28" viewBox="34 362 30 28" fill="none" stroke="#fff" stroke-width="1.7" stroke-linecap="round" stroke-linejoin="round"><rect x="38.4" y="371" width="20.2" height="15.4" rx="1.2"/><path d="M43.4 375V370.6Q43.4 366 48.5 366Q53.6 366 53.6 370.6V375"/></svg>
<svg class="b" style="left:34px;top:420px;" width="30" height="26" viewBox="34 420 30 26" fill="none" stroke="#333" stroke-width="1.6" stroke-linecap="round" stroke-linejoin="round"><path d="M38.2 430.8L48.5 423.2L58.8 430.8"/><path d="M40 430V442.6 M57 430V442.6"/><g fill="#333" stroke="none"><rect x="43.2" y="433" width="2" height="2"/><rect x="43.2" y="437" width="2" height="2"/><rect x="47.5" y="437" width="2" height="2"/><rect x="43.2" y="441" width="2" height="2"/><rect x="47.5" y="441" width="2" height="2"/><rect x="51.8" y="441" width="2" height="2"/></g></svg>
<svg class="b" style="left:34px;top:476px;" width="30" height="28" viewBox="34 476 30 28" fill="none" stroke="#333" stroke-width="1.6" stroke-linecap="round" stroke-linejoin="round"><rect x="43.8" y="480.2" width="9.4" height="2.8" rx="1.2"/><path d="M45 483.2Q38.6 487.4 38.6 495Q38.6 500.8 43.6 500.8H53.4Q58.4 500.8 58.4 495Q58.4 487.4 52 483.2"/><path d="M45.6 488.2L48.5 492.6L51.4 488.2 M48.5 492.6V498 M45.4 493H51.6 M45.4 495.6H51.6" stroke-width="1.4"/></svg>
<svg class="b" style="left:34px;top:533px;" width="30" height="28" viewBox="34 533 30 28" fill="none" stroke="#333" stroke-width="1.6" stroke-linecap="round" stroke-linejoin="round"><path d="M45.2 539H41.6Q39.8 539 39.8 540.8V556Q39.8 557.8 41.6 557.8H55.4Q57.2 557.8 57.2 556V540.8Q57.2 539 55.4 539H51.8"/><path d="M45.2 539.4Q45.4 537 48.5 537Q51.6 537 51.8 539.4Z"/><path d="M43.4 545.2H53.4 M43.4 549.5H53.4 M43.4 553.8H53.4"/></svg>
<svg class="b" style="left:34px;top:592px;" width="30" height="26" viewBox="34 592 30 26" fill="none" stroke="#333" stroke-width="1.6" stroke-linecap="round" stroke-linejoin="round"><rect x="38" y="595.8" width="21" height="18.2" rx="1.6"/><path d="M40.8 600.8H46.2 M40.8 605H46.2 M40.8 609.2H46.2"/><circle cx="53.3" cy="601.6" r="2.5"/><path d="M49.6 608.8Q49.8 604.6 53.3 604.6Q56.8 604.6 57 608.8"/></svg>
<svg class="b" style="left:34px;top:648px;" width="30" height="28" viewBox="34 648 30 28" fill="none" stroke="#333" stroke-width="1.6" stroke-linecap="round" stroke-linejoin="round"><path d="M44.6 654.2A9.8 9.8 0 0 0 38.9 663.6 M52.4 654.2A9.8 9.8 0 0 1 58.1 663.6 M43.4 671.2A9.8 9.8 0 0 0 53.6 671.2"/><g fill="#333" stroke="none"><circle cx="48.5" cy="653.2" r="2.1"/><circle cx="39.4" cy="668.2" r="2.1"/><circle cx="57.6" cy="668.2" r="2.1"/></g></svg>
<svg class="b" style="left:34px;top:705px;" width="30" height="28" viewBox="34 705 30 28" fill="none" stroke="#333" stroke-width="1.6" stroke-linecap="round" stroke-linejoin="round"><path d="M44 711.2H41.2Q39.2 711.2 39.2 713.2V727.4Q39.2 729.4 41.2 729.4H55.8Q57.8 729.4 57.8 727.4V713.2Q57.8 711.2 55.8 711.2H53"/><rect x="44.2" y="708.8" width="8.6" height="3.4" rx="1.7"/><path d="M43.4 718H53.6L50.6 715.4 M53.6 722.6H43.4L46.4 725.2"/></svg>
<svg class="b" style="left:34px;top:762px;" width="30" height="28" viewBox="34 762 30 28" fill="none" stroke="#333" stroke-width="1.6" stroke-linecap="round" stroke-linejoin="round"><rect x="38.2" y="771" width="20.4" height="15.8" rx="3.2"/><path d="M43 767L46 770.8 M54 767L51 770.8"/><g fill="#333" stroke="none"><circle cx="42.9" cy="766.9" r="1.3"/><circle cx="54.1" cy="766.9" r="1.3"/><circle cx="44.5" cy="776.3" r="1.15"/><circle cx="51" cy="776.3" r="1.15"/></g><path d="M43.4 779.6Q47.8 786.4 52.4 779.6"/></svg>
<svg class="b" style="left:24px;top:0px;" width="40" height="40" viewBox="24 0 40 40" fill="none" stroke="#ef8c4b" stroke-width="5" stroke-linecap="round" stroke-linejoin="round"><circle cx="42.8" cy="22.3" r="9.7" stroke-width="5"/><path d="M33.55 -3V22" stroke-width="5.9"/><path d="M47.2 -3L39 12.4" stroke-width="6.3"/><path d="M42.8 17Q43.9 21.2 48.1 22.3Q43.9 23.4 42.8 27.6Q41.7 23.4 37.5 22.3Q41.7 21.2 42.8 17Z" fill="#ef8c4b" stroke="none"/></svg>
<svg class="b" style="left:600px;top:20px;" width="28" height="28" viewBox="600 20 28 28" fill="none" stroke="#2a2a2a" stroke-width="1.7" stroke-linecap="round" stroke-linejoin="round"><path d="M624.05 33.60L624.04 34.05L624.01 34.49L623.96 34.94L623.71 35.35L623.12 35.67L622.49 35.93L621.86 36.14L621.26 36.31L620.96 36.57L620.82 36.88L620.67 37.18L620.51 37.48L620.34 37.76L620.15 38.05L619.95 38.32L619.88 38.70L620.03 39.31L620.16 39.96L620.25 40.64L620.27 41.31L620.04 41.73L619.68 42.00L619.31 42.24L618.92 42.48L618.53 42.69L618.13 42.89L617.72 43.07L617.24 43.06L616.67 42.71L616.13 42.29L615.63 41.85L615.18 41.42L614.81 41.28L614.48 41.32L614.14 41.34L613.80 41.35L613.46 41.34L613.12 41.32L612.79 41.28L612.42 41.42L611.97 41.85L611.47 42.29L610.93 42.71L610.36 43.06L609.88 43.07L609.47 42.89L609.07 42.69L608.67 42.48L608.29 42.24L607.92 42.00L607.56 41.73L607.33 41.31L607.35 40.64L607.44 39.96L607.57 39.31L607.72 38.70L607.65 38.32L607.45 38.05L607.26 37.76L607.09 37.48L606.93 37.18L606.78 36.88L606.64 36.57L606.34 36.31L605.74 36.14L605.11 35.93L604.48 35.67L603.89 35.35L603.64 34.94L603.59 34.49L603.56 34.05L603.55 33.60L603.56 33.15L603.59 32.71L603.64 32.26L603.89 31.85L604.48 31.53L605.11 31.27L605.74 31.06L606.34 30.89L606.64 30.63L606.78 30.32L606.93 30.02L607.09 29.73L607.26 29.44L607.45 29.15L607.65 28.88L607.72 28.50L607.57 27.89L607.44 27.24L607.35 26.56L607.33 25.89L607.56 25.47L607.92 25.20L608.29 24.96L608.67 24.72L609.07 24.51L609.47 24.31L609.88 24.13L610.36 24.14L610.93 24.49L611.47 24.91L611.97 25.35L612.42 25.78L612.79 25.92L613.12 25.88L613.46 25.86L613.80 25.85L614.14 25.86L614.48 25.88L614.81 25.92L615.18 25.78L615.63 25.35L616.13 24.91L616.67 24.49L617.24 24.14L617.72 24.13L618.13 24.31L618.53 24.51L618.92 24.72L619.31 24.96L619.68 25.20L620.04 25.47L620.27 25.89L620.25 26.56L620.16 27.24L620.03 27.89L619.88 28.50L619.95 28.88L620.15 29.15L620.34 29.44L620.51 29.73L620.67 30.02L620.82 30.32L620.96 30.63L621.26 30.89L621.86 31.06L622.49 31.27L623.12 31.53L623.71 31.85L623.96 32.26L624.01 32.71L624.04 33.15Z"/><circle cx="613.8" cy="33.6" r="3.3"/></svg>
<svg class="b" style="left:1612px;top:18px;" width="30" height="28" viewBox="1612 18 30 28" fill="none" stroke="#2a2a2a" stroke-width="1.7" stroke-linecap="round" stroke-linejoin="round"><path d="M1621.2 37.9H1617.6Q1615.6 37.9 1615.6 35.9V23.5Q1615.6 21.5 1617.6 21.5H1635.3Q1637.3 21.5 1637.3 23.5V35.9Q1637.3 37.9 1635.3 37.9H1626.2L1620.6 41.9"/><g fill="#2a2a2a" stroke="none"><circle cx="1620.2" cy="30.1" r="1.65"/><circle cx="1626.3" cy="30.1" r="1.65"/><circle cx="1632.4" cy="30.1" r="1.65"/></g></svg>
<svg class="b" style="left:1711px;top:18px;" width="28" height="26" viewBox="1711 18 28 26" fill="none" stroke="#2a2a2a" stroke-width="1.6" stroke-linecap="round" stroke-linejoin="round"><path d="M1717.6 29.4V28Q1717.6 21.6 1724.3 21.6Q1731 21.6 1731 28V29.4"/><path d="M1718.6 29.2Q1715.6 29.2 1715.6 32Q1715.6 34.8 1718.6 34.8Z"/><path d="M1730 29.2Q1733 29.2 1733 32Q1733 34.8 1730 34.8Z"/><path d="M1731 34.8Q1731 38.4 1727 38.9"/><circle cx="1725.4" cy="39.1" r="1.5"/></svg>
<svg class="b" style="left:1848px;top:15px" width="38" height="40" viewBox="1848 15 38 40"><defs><linearGradient id="rg" x1="0" y1="0" x2="0" y2="1"><stop offset="0" stop-color="#efc9a6"/><stop offset="0.6" stop-color="#efc0a2"/><stop offset="1" stop-color="#eaa790"/></linearGradient><radialGradient id="eg" cx="0.5" cy="0.5" r="0.5"><stop offset="0" stop-color="#0b1230"/><stop offset="0.55" stop-color="#101a3c"/><stop offset="0.7" stop-color="#7f96b6"/><stop offset="1" stop-color="#a9b9cf"/></radialGradient></defs><rect x="1850.8" y="24.5" width="2.2" height="12" rx="1" fill="#5a4134"/><rect x="1879.8" y="24.5" width="2.2" height="12" rx="1" fill="#5a4134"/><rect x="1854" y="43" width="6.6" height="8" rx="2.6" fill="#3a2a26"/><rect x="1873.6" y="43" width="6.4" height="8" rx="2.6" fill="#3a2a26"/><rect x="1860.2" y="42" width="13.6" height="9.2" rx="2" fill="#ece6e4"/><rect x="1860.2" y="49.4" width="13.6" height="1.8" rx="0.9" fill="#e9b3a2"/><rect x="1852.4" y="18.2" width="28" height="24.4" rx="6.5" fill="url(#rg)"/><path d="M1856 42Q1866.4 44.4 1877 42" stroke="#6b5a48" stroke-width="1.1" fill="none"/><rect x="1855.8" y="22.4" width="21.6" height="14.6" rx="4.4" fill="#ebe3e1"/><circle cx="1860.1" cy="31" r="4" fill="#a3b5cd"/><circle cx="1872.7" cy="31" r="4" fill="#a3b5cd"/><circle cx="1860.1" cy="31" r="2.7" fill="#0e1634"/><circle cx="1872.7" cy="31" r="2.7" fill="#0e1634"/><circle cx="1861.3" cy="29.7" r="0.75" fill="#e8eefc"/><circle cx="1873.9" cy="29.7" r="0.75" fill="#e8eefc"/><path d="M1864.6 39.2H1868.6L1866.6 40.8Z" fill="#cf7f74"/></svg>
<svg class="b" style="left:1324px;top:151px;" width="20" height="20" viewBox="1324 151 20 20" fill="none" stroke="#2a2a2a" stroke-width="1.5" stroke-linecap="round" stroke-linejoin="round"><circle cx="1333.7" cy="160.9" r="7.2"/><path d="M1331.6 157.4V164.4L1337.4 160.9Z" stroke-width="1.3"/></svg>
<svg class="b" style="left:1402px;top:151px;" width="20" height="20" viewBox="1402 151 20 20" fill="none" stroke="#2a2a2a" stroke-width="1.5" stroke-linecap="round" stroke-linejoin="round"><circle cx="1412" cy="160.9" r="7.2"/><path d="M1409.6 158.8Q1409.6 156.6 1412 156.6Q1414.4 156.6 1414.4 158.6Q1414.4 160 1412 161V162.2" stroke-width="1.4"/><circle cx="1412" cy="164.6" r="0.9" fill="#2a2a2a" stroke="none"/></svg>
<svg class="b" style="left:1491px;top:150px;" width="22" height="22" viewBox="1491 150 22 22" fill="none" stroke="#ee8145" stroke-width="1.4" stroke-linecap="round" stroke-linejoin="round"><path d="M1495 157.4L1503 153.6V167.6H1495Z"/><path d="M1503 156.2L1508.4 158.8V167.6H1503"/><path d="M1497.4 159.2H1500.6 M1497.4 162H1500.6 M1497.4 164.8H1500.6 M1505.2 161.4V161.5 M1505.2 164.4V164.5" stroke-width="1.2"/></svg>
<svg class="b" style="left:1581px;top:150px;" width="22" height="22" viewBox="1581 150 22 22" fill="none" stroke="#b5b5b5" stroke-width="1.4" stroke-linecap="round" stroke-linejoin="round"><path d="M1588 157.6V154.4H1596V157.6"/><path d="M1587.6 164.6H1586.4Q1585 164.6 1585 163.2V159.2Q1585 157.8 1586.4 157.8H1597.6Q1599 157.8 1599 159.2V163.2Q1599 164.6 1597.6 164.6H1596.4"/><rect x="1588" y="161.4" width="8" height="5.6" rx="0.8"/></svg>
<svg class="b" style="left:1662px;top:151px;" width="20" height="20" viewBox="1662 151 20 20" fill="none" stroke="#ee8145" stroke-width="1.4" stroke-linecap="round" stroke-linejoin="round"><rect x="1664.9" y="154.3" width="5.6" height="5.6" rx="2"/><rect x="1673" y="154.3" width="5.6" height="5.6" rx="2"/><rect x="1664.9" y="162.2" width="5.6" height="5.6" rx="2"/><rect x="1673" y="162.2" width="5.6" height="5.6" rx="2"/></svg>
<svg class="b" style="left:1734px;top:150px;" width="22" height="22" viewBox="1734 150 22 22" fill="none" stroke="#ee8145" stroke-width="1.4" stroke-linecap="round" stroke-linejoin="round"><path d="M1745 168H1739.4Q1738 168 1738 166.6V155.4Q1738 154 1739.4 154H1749.6Q1751 154 1751 155.4V160"/><path d="M1740.6 157.6H1748.2 M1740.6 160.6H1745.4" stroke-width="1.2"/><circle cx="1748.4" cy="164.6" r="2.7" stroke-width="1.3"/><path d="M1746.6 167L1745.2 168.6" stroke-width="1.3"/></svg>
<svg class="b" style="left:1900px;top:148px;" width="76" height="28" viewBox="1900 148 76 28" fill="none" stroke="#555" stroke-width="1.3" stroke-linecap="round" stroke-linejoin="round"><path d="M1913.4 157.2H1926.6 M1913.4 162H1926.6 M1913.4 166.8H1922.6" stroke="#fff" stroke-width="1.5"/><rect x="1949.2" y="156.4" width="4.6" height="4.4" rx="0.6" stroke-width="1.2"/><rect x="1949.2" y="163.8" width="4.6" height="4.4" rx="0.6" stroke-width="1.2"/><path d="M1958 157.2H1965.4 M1958 162H1965.4 M1958 166.8H1965.4" stroke-width="1.2"/></svg>
<svg class="b" style="left:1896px;top:212px;" width="22" height="24" viewBox="1896 212 22 24" fill="none" stroke="#e8804a" stroke-width="1.25" stroke-linecap="round" stroke-linejoin="round"><path d="M1915.10 223.70L1915.09 224.04L1915.07 224.38L1915.03 224.72L1914.85 225.03L1914.42 225.28L1913.96 225.49L1913.50 225.66L1913.07 225.80L1912.84 226.00L1912.74 226.24L1912.62 226.47L1912.50 226.70L1912.36 226.92L1912.21 227.14L1912.06 227.35L1912.00 227.64L1912.10 228.09L1912.18 228.58L1912.23 229.08L1912.23 229.57L1912.05 229.89L1911.77 230.09L1911.49 230.28L1911.20 230.45L1910.90 230.62L1910.60 230.77L1910.28 230.91L1909.92 230.90L1909.49 230.66L1909.09 230.36L1908.71 230.05L1908.37 229.74L1908.08 229.65L1907.82 229.68L1907.56 229.69L1907.30 229.70L1907.04 229.69L1906.78 229.68L1906.52 229.65L1906.23 229.74L1905.89 230.05L1905.51 230.36L1905.11 230.66L1904.68 230.90L1904.32 230.91L1904.00 230.77L1903.70 230.62L1903.40 230.45L1903.11 230.28L1902.83 230.09L1902.55 229.89L1902.37 229.57L1902.37 229.08L1902.42 228.58L1902.50 228.09L1902.60 227.64L1902.54 227.35L1902.39 227.14L1902.24 226.92L1902.10 226.70L1901.98 226.47L1901.86 226.24L1901.76 226.00L1901.53 225.80L1901.10 225.66L1900.64 225.49L1900.18 225.28L1899.75 225.03L1899.57 224.72L1899.53 224.38L1899.51 224.04L1899.50 223.70L1899.51 223.36L1899.53 223.02L1899.57 222.68L1899.75 222.37L1900.18 222.12L1900.64 221.91L1901.10 221.74L1901.53 221.60L1901.76 221.40L1901.86 221.16L1901.98 220.93L1902.10 220.70L1902.24 220.48L1902.39 220.26L1902.54 220.05L1902.60 219.76L1902.50 219.31L1902.42 218.82L1902.37 218.32L1902.37 217.83L1902.55 217.51L1902.83 217.31L1903.11 217.12L1903.40 216.95L1903.70 216.78L1904.00 216.63L1904.32 216.49L1904.68 216.50L1905.11 216.74L1905.51 217.04L1905.89 217.35L1906.23 217.66L1906.52 217.75L1906.78 217.72L1907.04 217.71L1907.30 217.70L1907.56 217.71L1907.82 217.72L1908.08 217.75L1908.37 217.66L1908.71 217.35L1909.09 217.04L1909.49 216.74L1909.92 216.50L1910.28 216.49L1910.60 216.63L1910.90 216.78L1911.20 216.95L1911.49 217.12L1911.77 217.31L1912.05 217.51L1912.23 217.83L1912.23 218.32L1912.18 218.82L1912.10 219.31L1912.00 219.76L1912.06 220.05L1912.21 220.26L1912.36 220.48L1912.50 220.70L1912.62 220.93L1912.74 221.16L1912.84 221.40L1913.07 221.60L1913.50 221.74L1913.96 221.91L1914.42 222.12L1914.85 222.37L1915.03 222.68L1915.07 223.02L1915.09 223.36Z"/><circle cx="1907.3" cy="223.7" r="2.3"/></svg>
<svg class="b" style="left:701.4px;top:800.5px;" width="22" height="22" viewBox="701.4 800.5 22 22" fill="none" stroke="#2a2a2a" stroke-width="1.4" stroke-linecap="round" stroke-linejoin="round"><circle cx="712.4" cy="811.5" r="8.6"/><path d="M709.8 809.7Q709.8 806.9 712.4 806.9Q715.0 806.9 715.0 809.3Q715.0 810.9 712.4 812.1V813.3" stroke-width="1.4"/><circle cx="712.4" cy="815.7" r="0.95" fill="#2a2a2a" stroke="none"/></svg>
<svg class="b" style="left:555px;top:937.6px;" width="22" height="22" viewBox="555 937.6 22 22" fill="none" stroke="#2a2a2a" stroke-width="1.4" stroke-linecap="round" stroke-linejoin="round"><circle cx="566" cy="948.6" r="7.7"/><path d="M563.4 946.8000000000001Q563.4 944.0 566 944.0Q568.6 944.0 568.6 946.4Q568.6 948.0 566 949.2V950.4" stroke-width="1.4"/><circle cx="566" cy="952.8000000000001" r="0.95" fill="#2a2a2a" stroke="none"/></svg>
<svg class="b" style="left:722.7px;top:937.6px;" width="22" height="22" viewBox="722.7 937.6 22 22" fill="none" stroke="#2a2a2a" stroke-width="1.4" stroke-linecap="round" stroke-linejoin="round"><circle cx="733.7" cy="948.6" r="7.7"/><path d="M731.1 946.8000000000001Q731.1 944.0 733.7 944.0Q736.3000000000001 944.0 736.3000000000001 946.4Q736.3000000000001 948.0 733.7 949.2V950.4" stroke-width="1.4"/><circle cx="733.7" cy="952.8000000000001" r="0.95" fill="#2a2a2a" stroke="none"/></svg>
<svg class="b" style="left:1046px;top:930px;" width="30" height="30" viewBox="1046 930 30 30" fill="none" stroke="#a8a8a8" stroke-width="1.25" stroke-linecap="round" stroke-linejoin="round"><circle cx="1060.5" cy="944.4" r="12"/><rect x="1054.8" y="940.2" width="11.4" height="10" rx="1.4"/><path d="M1057.8 942.6V939.8Q1057.8 937.4 1060.5 937.4Q1063.2 937.4 1063.2 939.8V942.6"/></svg>
<svg class="b" style="left:44px;top:942px;" width="26" height="26" viewBox="44 942 26 26" fill="none" stroke="#ee8a4b" stroke-width="1" stroke-linecap="round" stroke-linejoin="round"><path d="M58.64 960.58L58.16 962.96L55.04 962.96L54.56 960.58L52.18 959.20L49.88 959.98L48.32 957.28L50.14 955.67L50.14 952.93L48.32 951.32L49.88 948.62L52.18 949.40L54.56 948.02L55.04 945.64L58.16 945.64L58.64 948.02L61.02 949.40L63.32 948.62L64.88 951.32L63.06 952.93L63.06 955.67L64.88 957.28L63.32 959.98L61.02 959.20Z" fill="#ee8a4b" stroke="#ee8a4b" stroke-width="1.6"/><circle cx="56.6" cy="954.3" r="3.2" fill="#fdf3ec" stroke="none"/></svg>
<svg class="b" style="left:150px;top:942px;" width="34" height="26" viewBox="150 942 34 26" fill="none" stroke="#ee8a4b" stroke-width="1" stroke-linecap="round" stroke-linejoin="round"><path d="M167.6 946.6L154.6 955.2L167.6 963.8Z" fill="#ee8a4b" stroke="none"/><rect x="170.2" y="949.2" width="3.1" height="10" fill="#ee8a4b" stroke="none"/><rect x="175.8" y="949.2" width="3.3" height="10" fill="#ee8a4b" stroke="none"/></svg>
<div class="b" style="left:1962px;top:332px;width:40px;height:48.8px;background:#fff;box-shadow:0 0 6px rgba(0,0,0,.18)"></div>
<div class="b" style="left:1962px;top:387px;width:40px;height:50.4px;background:#fff;box-shadow:0 0 6px rgba(0,0,0,.18)"></div>
<div class="b" style="left:1962px;top:443.2px;width:40px;height:50px;background:#ee8145;box-shadow:0 0 6px rgba(0,0,0,.18)"></div>
<svg class="b" style="left:1970px;top:340px;" width="24" height="34" viewBox="1970 340 24 34" fill="none" stroke="#333" stroke-width="1.5" stroke-linecap="round" stroke-linejoin="round"><path d="M2002 345.4H1978.4Q1975.2 345.4 1975.2 348.6V366Q1975.2 369.2 1978.4 369.2H1991.4V366.4H1996"/></svg>
<span class="t" style="left:1979.6px;top:357.3px;font-size:16.2px;color:#333;font-weight:400;transform:translate(0,-50%);">草</span>
<svg class="b" style="left:1966px;top:396px;" width="28" height="34" viewBox="1966 396 28 34" fill="none" stroke="#222" stroke-width="1.7" stroke-linecap="round" stroke-linejoin="round"><path d="M1997 400.8L1978.4 414.1Q1974.3 417.6 1976.7 421.8Q1979.7 426.2 1984.3 423.2L1997 413.8"/><path d="M1997 407.2L1982.6 417.8"/></svg>
<svg class="b" style="left:1966px;top:450px;" width="28" height="38" viewBox="1966 450 28 38" fill="none" stroke="#fff" stroke-width="1.7" stroke-linecap="round" stroke-linejoin="round"><path d="M1996 456.2H1976.4Q1973.6 456.2 1973.6 459V479.6Q1973.6 482.4 1976.4 482.4H1996"/><path d="M1978 478.6L1986.6 469.4 M1978 471.8V478.6H1984.8 M1988.6 464.6L1996 457"/></svg>
<div class="b" style="left:1982.3px;top:194.3px;width:47.4px;height:47.4px;border-radius:50%;background:radial-gradient(circle at 45% 45%,#e9eefa 0,#f1f4fc 60%,#f8fafe 100%);border:2.5px solid #fcfdff;box-shadow:0 1px 6px rgba(0,0,0,.28)"></div>
<svg class="b" style="left:1984px;top:200px;" width="10" height="30" viewBox="1984 200 10 30" fill="none" stroke="#5563cf" stroke-width="2" stroke-linecap="round" stroke-linejoin="round"><path d="M1989.6 208.6Q1988.4 211.6 1988.6 214.6" stroke-width="2.2"/><path d="M1993.6 216Q1993 219 1994 222" stroke-width="2" opacity=".7"/></svg>
<!-- watermark -->
<div class="b" style="left:0;top:0;width:1994px;height:990px;overflow:hidden;pointer-events:none">
<span class="wm" style="left:30.5px;top:30.8px">电话：<span class="wl" style="font-size:18px;letter-spacing:1.85px">400-665-0028</span></span>
<span class="wm" style="left:30.5px;top:60.1px">网址：<span class="wl" style="font-size:17.5px;letter-spacing:0.3px">www.chanjet.net</span></span>
<span class="wm" style="left:301.5px;top:30.8px">电话：<span class="wl" style="font-size:18px;letter-spacing:1.85px">400-665-0028</span></span>
<span class="wm" style="left:301.5px;top:60.1px">网址：<span class="wl" style="font-size:17.5px;letter-spacing:0.3px">www.chanjet.net</span></span>
<span class="wm" style="left:572.5px;top:30.8px">电话：<span class="wl" style="font-size:18px;letter-spacing:1.85px">400-665-0028</span></span>
<span class="wm" style="left:572.5px;top:60.1px">网址：<span class="wl" style="font-size:17.5px;letter-spacing:0.3px">www.chanjet.net</span></span>
<span class="wm" style="left:843.5px;top:30.8px">电话：<span class="wl" style="font-size:18px;letter-spacing:1.85px">400-665-0028</span></span>
<span class="wm" style="left:843.5px;top:60.1px">网址：<span class="wl" style="font-size:17.5px;letter-spacing:0.3px">www.chanjet.net</span></span>
<span class="wm" style="left:1114.5px;top:30.8px">电话：<span class="wl" style="font-size:18px;letter-spacing:1.85px">400-665-0028</span></span>
<span class="wm" style="left:1114.5px;top:60.1px">网址：<span class="wl" style="font-size:17.5px;letter-spacing:0.3px">www.chanjet.net</span></span>
<span class="wm" style="left:1385.5px;top:30.8px">电话：<span class="wl" style="font-size:18px;letter-spacing:1.85px">400-665-0028</span></span>
<span class="wm" style="left:1385.5px;top:60.1px">网址：<span class="wl" style="font-size:17.5px;letter-spacing:0.3px">www.chanjet.net</span></span>
<span class="wm" style="left:1656.5px;top:30.8px">电话：<span class="wl" style="font-size:18px;letter-spacing:1.85px">400-665-0028</span></span>
<span class="wm" style="left:1656.5px;top:60.1px">网址：<span class="wl" style="font-size:17.5px;letter-spacing:0.3px">www.chanjet.net</span></span>
<span class="wm" style="left:1927.5px;top:30.8px">电话：<span class="wl" style="font-size:18px;letter-spacing:1.85px">400-665-0028</span></span>
<span class="wm" style="left:1927.5px;top:60.1px">网址：<span class="wl" style="font-size:17.5px;letter-spacing:0.3px">www.chanjet.net</span></span>
<span class="wm" style="left:30.5px;top:140.8px">电话：<span class="wl" style="font-size:18px;letter-spacing:1.85px">400-665-0028</span></span>
<span class="wm" style="left:30.5px;top:170.10000000000002px">网址：<span class="wl" style="font-size:17.5px;letter-spacing:0.3px">www.chanjet.net</span></span>
<span class="wm" style="left:301.5px;top:140.8px">电话：<span class="wl" style="font-size:18px;letter-spacing:1.85px">400-665-0028</span></span>
<span class="wm" style="left:301.5px;top:170.10000000000002px">网址：<span class="wl" style="font-size:17.5px;letter-spacing:0.3px">www.chanjet.net</span></span>
<span class="wm" style="left:572.5px;top:140.8px">电话：<span class="wl" style="font-size:18px;letter-spacing:1.85px">400-665-0028</span></span>
<span class="wm" style="left:572.5px;top:170.10000000000002px">网址：<span class="wl" style="font-size:17.5px;letter-spacing:0.3px">www.chanjet.net</span></span>
<span class="wm" style="left:843.5px;top:140.8px">电话：<span class="wl" style="font-size:18px;letter-spacing:1.85px">400-665-0028</span></span>
<span class="wm" style="left:843.5px;top:170.10000000000002px">网址：<span class="wl" style="font-size:17.5px;letter-spacing:0.3px">www.chanjet.net</span></span>
<span class="wm" style="left:1114.5px;top:140.8px">电话：<span class="wl" style="font-size:18px;letter-spacing:1.85px">400-665-0028</span></span>
<span class="wm" style="left:1114.5px;top:170.10000000000002px">网址：<span class="wl" style="font-size:17.5px;letter-spacing:0.3px">www.chanjet.net</span></span>
<span class="wm" style="left:1385.5px;top:140.8px">电话：<span class="wl" style="font-size:18px;letter-spacing:1.85px">400-665-0028</span></span>
<span class="wm" style="left:1385.5px;top:170.10000000000002px">网址：<span class="wl" style="font-size:17.5px;letter-spacing:0.3px">www.chanjet.net</span></span>
<span class="wm" style="left:1656.5px;top:140.8px">电话：<span class="wl" style="font-size:18px;letter-spacing:1.85px">400-665-0028</span></span>
<span class="wm" style="left:1656.5px;top:170.10000000000002px">网址：<span class="wl" style="font-size:17.5px;letter-spacing:0.3px">www.chanjet.net</span></span>
<span class="wm" style="left:1927.5px;top:140.8px">电话：<span class="wl" style="font-size:18px;letter-spacing:1.85px">400-665-0028</span></span>
<span class="wm" style="left:1927.5px;top:170.10000000000002px">网址：<span class="wl" style="font-size:17.5px;letter-spacing:0.3px">www.chanjet.net</span></span>
<span class="wm" style="left:30.5px;top:250.8px">电话：<span class="wl" style="font-size:18px;letter-spacing:1.85px">400-665-0028</span></span>
<span class="wm" style="left:30.5px;top:280.1px">网址：<span class="wl" style="font-size:17.5px;letter-spacing:0.3px">www.chanjet.net</span></span>
<span class="wm" style="left:301.5px;top:250.8px">电话：<span class="wl" style="font-size:18px;letter-spacing:1.85px">400-665-0028</span></span>
<span class="wm" style="left:301.5px;top:280.1px">网址：<span class="wl" style="font-size:17.5px;letter-spacing:0.3px">www.chanjet.net</span></span>
<span class="wm" style="left:572.5px;top:250.8px">电话：<span class="wl" style="font-size:18px;letter-spacing:1.85px">400-665-0028</span></span>
<span class="wm" style="left:572.5px;top:280.1px">网址：<span class="wl" style="font-size:17.5px;letter-spacing:0.3px">www.chanjet.net</span></span>
<span class="wm" style="left:843.5px;top:250.8px">电话：<span class="wl" style="font-size:18px;letter-spacing:1.85px">400-665-0028</span></span>
<span class="wm" style="left:843.5px;top:280.1px">网址：<span class="wl" style="font-size:17.5px;letter-spacing:0.3px">www.chanjet.net</span></span>
<span class="wm" style="left:1114.5px;top:250.8px">电话：<span class="wl" style="font-size:18px;letter-spacing:1.85px">400-665-0028</span></span>
<span class="wm" style="left:1114.5px;top:280.1px">网址：<span class="wl" style="font-size:17.5px;letter-spacing:0.3px">www.chanjet.net</span></span>
<span class="wm" style="left:1385.5px;top:250.8px">电话：<span class="wl" style="font-size:18px;letter-spacing:1.85px">400-665-0028</span></span>
<span class="wm" style="left:1385.5px;top:280.1px">网址：<span class="wl" style="font-size:17.5px;letter-spacing:0.3px">www.chanjet.net</span></span>
<span class="wm" style="left:1656.5px;top:250.8px">电话：<span class="wl" style="font-size:18px;letter-spacing:1.85px">400-665-0028</span></span>
<span class="wm" style="left:1656.5px;top:280.1px">网址：<span class="wl" style="font-size:17.5px;letter-spacing:0.3px">www.chanjet.net</span></span>
<span class="wm" style="left:1927.5px;top:250.8px">电话：<span class="wl" style="font-size:18px;letter-spacing:1.85px">400-665-0028</span></span>
<span class="wm" style="left:1927.5px;top:280.1px">网址：<span class="wl" style="font-size:17.5px;letter-spacing:0.3px">www.chanjet.net</span></span>
<span class="wm" style="left:30.5px;top:360.8px">电话：<span class="wl" style="font-size:18px;letter-spacing:1.85px">400-665-0028</span></span>
<span class="wm" style="left:30.5px;top:390.1px">网址：<span class="wl" style="font-size:17.5px;letter-spacing:0.3px">www.chanjet.net</span></span>
<span class="wm" style="left:301.5px;top:360.8px">电话：<span class="wl" style="font-size:18px;letter-spacing:1.85px">400-665-0028</span></span>
<span class="wm" style="left:301.5px;top:390.1px">网址：<span class="wl" style="font-size:17.5px;letter-spacing:0.3px">www.chanjet.net</span></span>
<span class="wm" style="left:572.5px;top:360.8px">电话：<span class="wl" style="font-size:18px;letter-spacing:1.85px">400-665-0028</span></span>
<span class="wm" style="left:572.5px;top:390.1px">网址：<span class="wl" style="font-size:17.5px;letter-spacing:0.3px">www.chanjet.net</span></span>
<span class="wm" style="left:843.5px;top:360.8px">电话：<span class="wl" style="font-size:18px;letter-spacing:1.85px">400-665-0028</span></span>
<span class="wm" style="left:843.5px;top:390.1px">网址：<span class="wl" style="font-size:17.5px;letter-spacing:0.3px">www.chanjet.net</span></span>
<span class="wm" style="left:1114.5px;top:360.8px">电话：<span class="wl" style="font-size:18px;letter-spacing:1.85px">400-665-0028</span></span>
<span class="wm" style="left:1114.5px;top:390.1px">网址：<span class="wl" style="font-size:17.5px;letter-spacing:0.3px">www.chanjet.net</span></span>
<span class="wm" style="left:1385.5px;top:360.8px">电话：<span class="wl" style="font-size:18px;letter-spacing:1.85px">400-665-0028</span></span>
<span class="wm" style="left:1385.5px;top:390.1px">网址：<span class="wl" style="font-size:17.5px;letter-spacing:0.3px">www.chanjet.net</span></span>
<span class="wm" style="left:1656.5px;top:360.8px">电话：<span class="wl" style="font-size:18px;letter-spacing:1.85px">400-665-0028</span></span>
<span class="wm" style="left:1656.5px;top:390.1px">网址：<span class="wl" style="font-size:17.5px;letter-spacing:0.3px">www.chanjet.net</span></span>
<span class="wm" style="left:1927.5px;top:360.8px">电话：<span class="wl" style="font-size:18px;letter-spacing:1.85px">400-665-0028</span></span>
<span class="wm" style="left:1927.5px;top:390.1px">网址：<span class="wl" style="font-size:17.5px;letter-spacing:0.3px">www.chanjet.net</span></span>
<span class="wm" style="left:30.5px;top:470.8px">电话：<span class="wl" style="font-size:18px;letter-spacing:1.85px">400-665-0028</span></span>
<span class="wm" style="left:30.5px;top:500.1px">网址：<span class="wl" style="font-size:17.5px;letter-spacing:0.3px">www.chanjet.net</span></span>
<span class="wm" style="left:301.5px;top:470.8px">电话：<span class="wl" style="font-size:18px;letter-spacing:1.85px">400-665-0028</span></span>
<span class="wm" style="left:301.5px;top:500.1px">网址：<span class="wl" style="font-size:17.5px;letter-spacing:0.3px">www.chanjet.net</span></span>
<span class="wm" style="left:572.5px;top:470.8px">电话：<span class="wl" style="font-size:18px;letter-spacing:1.85px">400-665-0028</span></span>
<span class="wm" style="left:572.5px;top:500.1px">网址：<span class="wl" style="font-size:17.5px;letter-spacing:0.3px">www.chanjet.net</span></span>
<span class="wm" style="left:843.5px;top:470.8px">电话：<span class="wl" style="font-size:18px;letter-spacing:1.85px">400-665-0028</span></span>
<span class="wm" style="left:843.5px;top:500.1px">网址：<span class="wl" style="font-size:17.5px;letter-spacing:0.3px">www.chanjet.net</span></span>
<span class="wm" style="left:1114.5px;top:470.8px">电话：<span class="wl" style="font-size:18px;letter-spacing:1.85px">400-665-0028</span></span>
<span class="wm" style="left:1114.5px;top:500.1px">网址：<span class="wl" style="font-size:17.5px;letter-spacing:0.3px">www.chanjet.net</span></span>
<span class="wm" style="left:1385.5px;top:470.8px">电话：<span class="wl" style="font-size:18px;letter-spacing:1.85px">400-665-0028</span></span>
<span class="wm" style="left:1385.5px;top:500.1px">网址：<span class="wl" style="font-size:17.5px;letter-spacing:0.3px">www.chanjet.net</span></span>
<span class="wm" style="left:1656.5px;top:470.8px">电话：<span class="wl" style="font-size:18px;letter-spacing:1.85px">400-665-0028</span></span>
<span class="wm" style="left:1656.5px;top:500.1px">网址：<span class="wl" style="font-size:17.5px;letter-spacing:0.3px">www.chanjet.net</span></span>
<span class="wm" style="left:1927.5px;top:470.8px">电话：<span class="wl" style="font-size:18px;letter-spacing:1.85px">400-665-0028</span></span>
<span class="wm" style="left:1927.5px;top:500.1px">网址：<span class="wl" style="font-size:17.5px;letter-spacing:0.3px">www.chanjet.net</span></span>
<span class="wm" style="left:30.5px;top:580.8px">电话：<span class="wl" style="font-size:18px;letter-spacing:1.85px">400-665-0028</span></span>
<span class="wm" style="left:30.5px;top:610.0999999999999px">网址：<span class="wl" style="font-size:17.5px;letter-spacing:0.3px">www.chanjet.net</span></span>
<span class="wm" style="left:301.5px;top:580.8px">电话：<span class="wl" style="font-size:18px;letter-spacing:1.85px">400-665-0028</span></span>
<span class="wm" style="left:301.5px;top:610.0999999999999px">网址：<span class="wl" style="font-size:17.5px;letter-spacing:0.3px">www.chanjet.net</span></span>
<span class="wm" style="left:572.5px;top:580.8px">电话：<span class="wl" style="font-size:18px;letter-spacing:1.85px">400-665-0028</span></span>
<span class="wm" style="left:572.5px;top:610.0999999999999px">网址：<span class="wl" style="font-size:17.5px;letter-spacing:0.3px">www.chanjet.net</span></span>
<span class="wm" style="left:843.5px;top:580.8px">电话：<span class="wl" style="font-size:18px;letter-spacing:1.85px">400-665-0028</span></span>
<span class="wm" style="left:843.5px;top:610.0999999999999px">网址：<span class="wl" style="font-size:17.5px;letter-spacing:0.3px">www.chanjet.net</span></span>
<span class="wm" style="left:1114.5px;top:580.8px">电话：<span class="wl" style="font-size:18px;letter-spacing:1.85px">400-665-0028</span></span>
<span class="wm" style="left:1114.5px;top:610.0999999999999px">网址：<span class="wl" style="font-size:17.5px;letter-spacing:0.3px">www.chanjet.net</span></span>
<span class="wm" style="left:1385.5px;top:580.8px">电话：<span class="wl" style="font-size:18px;letter-spacing:1.85px">400-665-0028</span></span>
<span class="wm" style="left:1385.5px;top:610.0999999999999px">网址：<span class="wl" style="font-size:17.5px;letter-spacing:0.3px">www.chanjet.net</span></span>
<span class="wm" style="left:1656.5px;top:580.8px">电话：<span class="wl" style="font-size:18px;letter-spacing:1.85px">400-665-0028</span></span>
<span class="wm" style="left:1656.5px;top:610.0999999999999px">网址：<span class="wl" style="font-size:17.5px;letter-spacing:0.3px">www.chanjet.net</span></span>
<span class="wm" style="left:1927.5px;top:580.8px">电话：<span class="wl" style="font-size:18px;letter-spacing:1.85px">400-665-0028</span></span>
<span class="wm" style="left:1927.5px;top:610.0999999999999px">网址：<span class="wl" style="font-size:17.5px;letter-spacing:0.3px">www.chanjet.net</span></span>
<span class="wm" style="left:30.5px;top:690.8px">电话：<span class="wl" style="font-size:18px;letter-spacing:1.85px">400-665-0028</span></span>
<span class="wm" style="left:30.5px;top:720.0999999999999px">网址：<span class="wl" style="font-size:17.5px;letter-spacing:0.3px">www.chanjet.net</span></span>
<span class="wm" style="left:301.5px;top:690.8px">电话：<span class="wl" style="font-size:18px;letter-spacing:1.85px">400-665-0028</span></span>
<span class="wm" style="left:301.5px;top:720.0999999999999px">网址：<span class="wl" style="font-size:17.5px;letter-spacing:0.3px">www.chanjet.net</span></span>
<span class="wm" style="left:572.5px;top:690.8px">电话：<span class="wl" style="font-size:18px;letter-spacing:1.85px">400-665-0028</span></span>
<span class="wm" style="left:572.5px;top:720.0999999999999px">网址：<span class="wl" style="font-size:17.5px;letter-spacing:0.3px">www.chanjet.net</span></span>
<span class="wm" style="left:843.5px;top:690.8px">电话：<span class="wl" style="font-size:18px;letter-spacing:1.85px">400-665-0028</span></span>
<span class="wm" style="left:843.5px;top:720.0999999999999px">网址：<span class="wl" style="font-size:17.5px;letter-spacing:0.3px">www.chanjet.net</span></span>
<span class="wm" style="left:1114.5px;top:690.8px">电话：<span class="wl" style="font-size:18px;letter-spacing:1.85px">400-665-0028</span></span>
<span class="wm" style="left:1114.5px;top:720.0999999999999px">网址：<span class="wl" style="font-size:17.5px;letter-spacing:0.3px">www.chanjet.net</span></span>
<span class="wm" style="left:1385.5px;top:690.8px">电话：<span class="wl" style="font-size:18px;letter-spacing:1.85px">400-665-0028</span></span>
<span class="wm" style="left:1385.5px;top:720.0999999999999px">网址：<span class="wl" style="font-size:17.5px;letter-spacing:0.3px">www.chanjet.net</span></span>
<span class="wm" style="left:1656.5px;top:690.8px">电话：<span class="wl" style="font-size:18px;letter-spacing:1.85px">400-665-0028</span></span>
<span class="wm" style="left:1656.5px;top:720.0999999999999px">网址：<span class="wl" style="font-size:17.5px;letter-spacing:0.3px">www.chanjet.net</span></span>
<span class="wm" style="left:1927.5px;top:690.8px">电话：<span class="wl" style="font-size:18px;letter-spacing:1.85px">400-665-0028</span></span>
<span class="wm" style="left:1927.5px;top:720.0999999999999px">网址：<span class="wl" style="font-size:17.5px;letter-spacing:0.3px">www.chanjet.net</span></span>
<span class="wm" style="left:30.5px;top:800.8px">电话：<span class="wl" style="font-size:18px;letter-spacing:1.85px">400-665-0028</span></span>
<span class="wm" style="left:30.5px;top:830.0999999999999px">网址：<span class="wl" style="font-size:17.5px;letter-spacing:0.3px">www.chanjet.net</span></span>
<span class="wm" style="left:301.5px;top:800.8px">电话：<span class="wl" style="font-size:18px;letter-spacing:1.85px">400-665-0028</span></span>
<span class="wm" style="left:301.5px;top:830.0999999999999px">网址：<span class="wl" style="font-size:17.5px;letter-spacing:0.3px">www.chanjet.net</span></span>
<span class="wm" style="left:572.5px;top:800.8px">电话：<span class="wl" style="font-size:18px;letter-spacing:1.85px">400-665-0028</span></span>
<span class="wm" style="left:572.5px;top:830.0999999999999px">网址：<span class="wl" style="font-size:17.5px;letter-spacing:0.3px">www.chanjet.net</span></span>
<span class="wm" style="left:843.5px;top:800.8px">电话：<span class="wl" style="font-size:18px;letter-spacing:1.85px">400-665-0028</span></span>
<span class="wm" style="left:843.5px;top:830.0999999999999px">网址：<span class="wl" style="font-size:17.5px;letter-spacing:0.3px">www.chanjet.net</span></span>
<span class="wm" style="left:1114.5px;top:800.8px">电话：<span class="wl" style="font-size:18px;letter-spacing:1.85px">400-665-0028</span></span>
<span class="wm" style="left:1114.5px;top:830.0999999999999px">网址：<span class="wl" style="font-size:17.5px;letter-spacing:0.3px">www.chanjet.net</span></span>
<span class="wm" style="left:1385.5px;top:800.8px">电话：<span class="wl" style="font-size:18px;letter-spacing:1.85px">400-665-0028</span></span>
<span class="wm" style="left:1385.5px;top:830.0999999999999px">网址：<span class="wl" style="font-size:17.5px;letter-spacing:0.3px">www.chanjet.net</span></span>
<span class="wm" style="left:1656.5px;top:800.8px">电话：<span class="wl" style="font-size:18px;letter-spacing:1.85px">400-665-0028</span></span>
<span class="wm" style="left:1656.5px;top:830.0999999999999px">网址：<span class="wl" style="font-size:17.5px;letter-spacing:0.3px">www.chanjet.net</span></span>
<span class="wm" style="left:1927.5px;top:800.8px">电话：<span class="wl" style="font-size:18px;letter-spacing:1.85px">400-665-0028</span></span>
<span class="wm" style="left:1927.5px;top:830.0999999999999px">网址：<span class="wl" style="font-size:17.5px;letter-spacing:0.3px">www.chanjet.net</span></span>
<span class="wm" style="left:30.5px;top:910.8px">电话：<span class="wl" style="font-size:18px;letter-spacing:1.85px">400-665-0028</span></span>
<span class="wm" style="left:30.5px;top:940.0999999999999px">网址：<span class="wl" style="font-size:17.5px;letter-spacing:0.3px">www.chanjet.net</span></span>
<span class="wm" style="left:301.5px;top:910.8px">电话：<span class="wl" style="font-size:18px;letter-spacing:1.85px">400-665-0028</span></span>
<span class="wm" style="left:301.5px;top:940.0999999999999px">网址：<span class="wl" style="font-size:17.5px;letter-spacing:0.3px">www.chanjet.net</span></span>
<span class="wm" style="left:572.5px;top:910.8px">电话：<span class="wl" style="font-size:18px;letter-spacing:1.85px">400-665-0028</span></span>
<span class="wm" style="left:572.5px;top:940.0999999999999px">网址：<span class="wl" style="font-size:17.5px;letter-spacing:0.3px">www.chanjet.net</span></span>
<span class="wm" style="left:843.5px;top:910.8px">电话：<span class="wl" style="font-size:18px;letter-spacing:1.85px">400-665-0028</span></span>
<span class="wm" style="left:843.5px;top:940.0999999999999px">网址：<span class="wl" style="font-size:17.5px;letter-spacing:0.3px">www.chanjet.net</span></span>
<span class="wm" style="left:1114.5px;top:910.8px">电话：<span class="wl" style="font-size:18px;letter-spacing:1.85px">400-665-0028</span></span>
<span class="wm" style="left:1114.5px;top:940.0999999999999px">网址：<span class="wl" style="font-size:17.5px;letter-spacing:0.3px">www.chanjet.net</span></span>
<span class="wm" style="left:1385.5px;top:910.8px">电话：<span class="wl" style="font-size:18px;letter-spacing:1.85px">400-665-0028</span></span>
<span class="wm" style="left:1385.5px;top:940.0999999999999px">网址：<span class="wl" style="font-size:17.5px;letter-spacing:0.3px">www.chanjet.net</span></span>
<span class="wm" style="left:1656.5px;top:910.8px">电话：<span class="wl" style="font-size:18px;letter-spacing:1.85px">400-665-0028</span></span>
<span class="wm" style="left:1656.5px;top:940.0999999999999px">网址：<span class="wl" style="font-size:17.5px;letter-spacing:0.3px">www.chanjet.net</span></span>
<span class="wm" style="left:1927.5px;top:910.8px">电话：<span class="wl" style="font-size:18px;letter-spacing:1.85px">400-665-0028</span></span>
<span class="wm" style="left:1927.5px;top:940.0999999999999px">网址：<span class="wl" style="font-size:17.5px;letter-spacing:0.3px">www.chanjet.net</span></span>
</div>
</div>
</body></html>
